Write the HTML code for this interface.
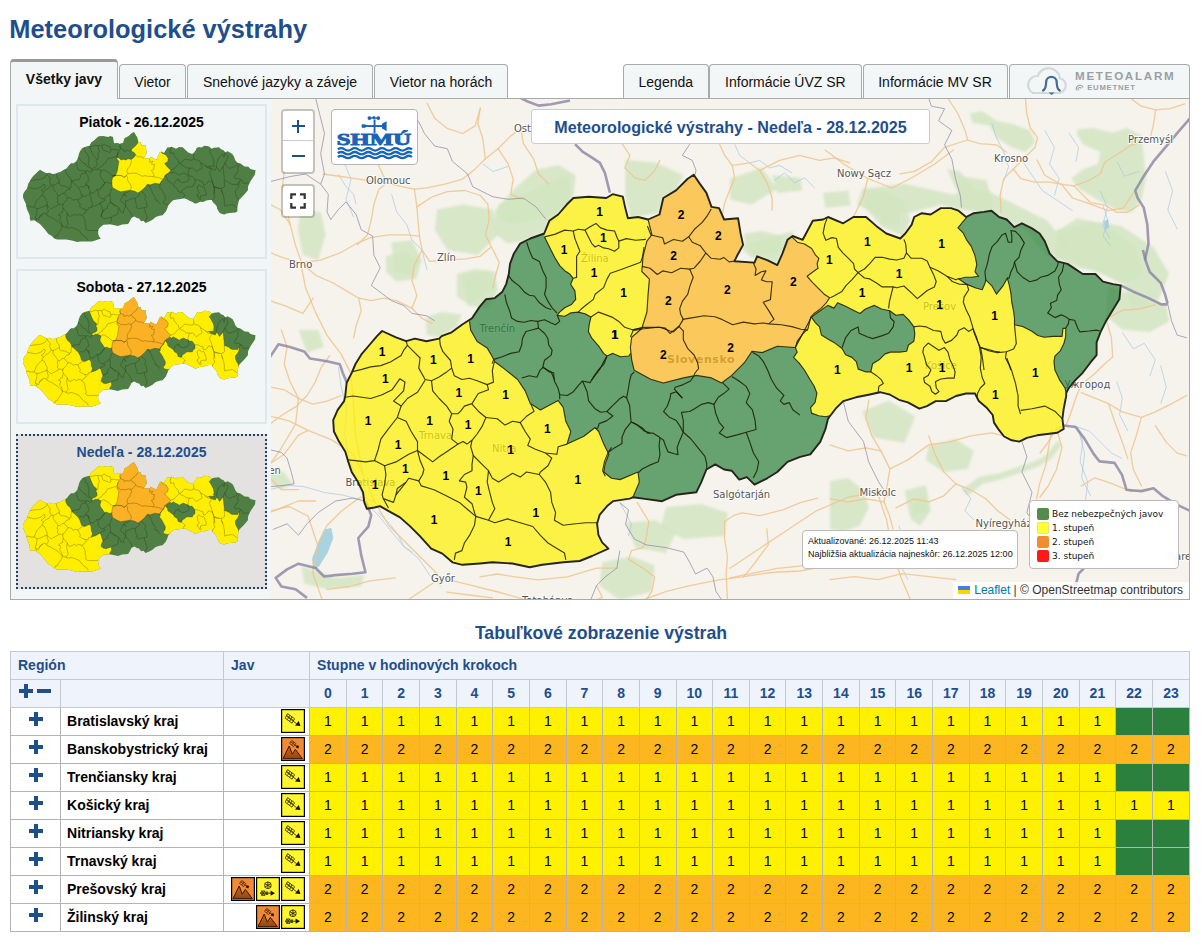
<!DOCTYPE html><html lang="sk"><head><meta charset="utf-8"><title>Meteorologické výstrahy</title><style>
*{box-sizing:border-box}
html,body{margin:0;padding:0;background:#fff}
body{width:1202px;height:947px;position:relative;overflow:hidden;font-family:"Liberation Sans",Arial,sans-serif;font-size:14px;color:#000}
h1{position:absolute;left:9.3px;top:14px;margin:0;font-size:25.4px;line-height:30px;font-weight:bold;color:#1f4e8c;white-space:nowrap}
.tab{position:absolute;top:64px;height:35px;border:1px solid #aaa;border-bottom:none;border-radius:4px 4px 0 0;background:#f3f6f6;font-size:14px;line-height:34px;text-align:center;white-space:nowrap;color:#111}
.tab.act{top:59px;height:40px;border-top:3px solid #999;font-weight:bold;line-height:35px;z-index:3}
.panel{position:absolute;left:10px;top:98px;width:1180px;height:502px;border:1px solid #aaa;background:#f3f6f6}
.thumb{position:absolute;left:16px;width:251px;height:155px;border:2px solid #dfe6ee;background:#f3f6f7}
.thumb.sel{border:2px dotted #1f3f6f;background:#e3e2e0}
.thumb .t{position:absolute;left:0;right:0;top:8px;text-align:center;font-weight:bold;font-size:14px;line-height:16px}
.thumb.sel .t{color:#1f4e8c}
.thumb svg{position:absolute;left:5.3px;top:26px}
.map{position:absolute;left:271px;top:99px;width:918px;height:500px;overflow:hidden;background:#f2efe9}
.map svg.sk{position:absolute;left:0;top:0}
.lctl{position:absolute;background:#fff;border:2px solid rgba(0,0,0,.2);border-radius:4px;background-clip:padding-box}
.zoom{left:10px;top:10px;width:34px;height:65px}
.zoom div{height:30px;width:30px;position:relative;border-bottom:1px solid #ccc}.zoom div:before{content:"";position:absolute;left:8.500px;top:14px;width:13px;height:2.200px;background:#1f4e8c}.zoom div.pl:after{content:"";position:absolute;left:13.900px;top:8.600px;width:2.200px;height:13px;background:#1f4e8c}
.zoom div+div{border-bottom:none;height:31px}
.fs{left:10px;top:85px;width:34px;height:34px}
.logo{position:absolute;left:60px;top:10px;width:87px;height:56px;background:#fff;border:1px solid #b4b4b4;border-radius:4px}
.mtitle{position:absolute;left:260px;top:10px;width:399px;height:35px;background:#fff;border:1px solid #ccc;border-radius:3px;font-weight:bold;font-size:16.1px;line-height:34px;text-align:center;color:#1f4e8c;white-space:nowrap}
.info{position:absolute;left:531px;top:431px;width:216px;height:39px;background:#fff;border:1px solid #bbb;border-radius:4px;font-size:9px;line-height:13px;padding:4px 0 0 5px;white-space:nowrap;color:#111}
.legend{position:absolute;left:758px;top:401px;width:150px;height:69px;background:#fff;border:1px solid #bbb;border-radius:4px;font-family:"DejaVu Sans",Verdana,sans-serif;font-size:9px;color:#111}
.legend div{position:absolute;left:22px;white-space:nowrap;line-height:12px}
.legend i{position:absolute;left:7px;width:12px;height:12px;border-radius:2px}
.attr{position:absolute;right:0;bottom:0;height:17px;background:rgba(255,255,255,.8);font-size:12px;line-height:17px;padding:0 6px 0 5px;white-space:nowrap;color:#333}
.attr a{color:#0078a8;text-decoration:none}
.flag{display:inline-block;width:12px;height:8px;margin-right:4px;vertical-align:0;background:linear-gradient(#4c7be1 50%,#ffd500 50%)}
h2{position:absolute;left:0;width:1202px;top:622px;margin:0;text-align:center;font-size:17.7px;line-height:22px;color:#1f4e8c;font-weight:bold}
table.wt{position:absolute;left:10px;top:651px;width:1180px;border-collapse:collapse;table-layout:fixed;font-size:14px}
table.wt td,table.wt th{border:1px solid #b4b4b4;height:28px;padding:0 0 1px 0;text-align:center;vertical-align:middle;overflow:hidden;white-space:nowrap}
table.wt tr.h th{background:#eff3fb;color:#1f4e8c;font-weight:bold;border-color:#c4c8cf}
table.wt th.l{text-align:left;padding-left:7px}
table.wt td.n{text-align:left;padding-left:6px;font-weight:bold}
table.wt td.j{text-align:right;padding-right:4px;font-size:0;line-height:0}
table.wt td.j svg{margin-left:1px;vertical-align:middle}
td.v1{background:#fff100}td.v2{background:#fdb61f}td.v0{background:#2b803e}
.plus{display:inline-block;width:14px;height:14px;position:relative;vertical-align:middle;margin-top:-6px}
.plus:before{content:"";position:absolute;left:0;top:5px;width:14px;height:4px;background:#1f4e8c}
.plus:after{content:"";position:absolute;left:5px;top:0;width:4px;height:14px;background:#1f4e8c}
.minus{display:inline-block;width:14px;height:4px;background:#1f4e8c;vertical-align:middle;margin-left:4px;margin-top:-6px}
th.pm{text-align:left!important;padding-left:8px!important}
</style></head><body>
<h1>Meteorologické výstrahy</h1>
<div class="tab act" style="left:10px;width:108px">Všetky javy</div>
<div class="tab " style="left:119px;width:67px">Vietor</div>
<div class="tab " style="left:187px;width:186px">Snehové jazyky a záveje</div>
<div class="tab " style="left:374px;width:134px">Vietor na horách</div>
<div class="tab " style="left:623px;width:85.6px">Legenda</div>
<div class="tab " style="left:709.2px;width:152.4px">Informácie ÚVZ SR</div>
<div class="tab " style="left:862.5px;width:145px">Informácie MV SR</div>
<div class="tab" style="left:1008.5px;width:181.5px"><svg width="179" height="34" viewBox="0 0 179 34"><path d="M23 28h25.5a7.5 7.5 0 0 0 1.5-14.8a11.5 11.5 0 0 0-22.3-2.2a9 9 0 0 0-4.700 17z" fill="none" stroke="#d3d8db" stroke-width="2.2"/><path d="M33 25.5c3.400-2 2.600-5.500 3.200-8.500a5.200 5.200 0 0 1 10.400 0c.6 3-.2 6.500 3.200 8.500" fill="none" stroke="#3f6f96" stroke-width="2.2" stroke-linecap="round"/><path d="M38.600 27.500h6l-3 2.600z" fill="#3f6f96"/><text x="65" y="14.600" font-family="Liberation Sans,sans-serif" font-weight="bold" font-size="11.600" letter-spacing="1.730" fill="#9a9fa3">METEOALARM</text><text x="77.200" y="25.200" font-family="Liberation Sans,sans-serif" font-weight="bold" font-size="7.700" letter-spacing="0.780" fill="#9a9fa3">EUMETNET</text><path d="M66.500 25.300a3.300 3.300 0 1 1 6.600-2.800M68.600 25.300a1.600 1.600 0 1 1 2.600-1.600" fill="none" stroke="#9a9fa3" stroke-width="1.100"/></svg></div>
<div class="panel"></div>
<svg width="0" height="0" style="position:absolute"><defs>
<clipPath id="mskc"><polygon points="344.8,339.1 347.3,326.7 353.4,317.1 358.1,308.7 365.4,299.2 373.8,291.2 382.2,283.1 387.8,278.5 401,286.2 410.6,291 419.7,289.3 430.8,292.9 443.6,291.5 446.3,289.3 456.7,286.4 467.5,279.8 478.1,274.3 486.7,263.6 493.6,256.6 502.5,256.2 510.6,250.5 515,243.3 518.4,233.4 520.5,223.5 525.1,213.6 532.3,204.1 542.7,199.9 556.8,196.1 562.8,183.8 572.1,178.3 581.6,168.8 588.4,163 603.4,162.9 620.6,165.6 627.2,162.3 636.9,165.6 638.5,177.1 640.3,187.5 650.3,186.9 660.1,190.2 671.6,186 676.6,169.8 689.6,163.1 701.6,152.6 708,148.7 713.6,158.5 719.2,167.7 723.3,182 730.7,183.7 734.8,195.4 748.7,195.2 750.1,210.5 751.8,222 744.9,233 742.1,237.8 762,240.4 764.9,234.3 774.7,238.7 784.3,244.3 790.1,233.3 796,219.7 801.2,216.2 810.9,220.6 822,202.2 832.1,201.5 837.2,199.3 851.8,206.5 862.2,200.7 874.6,201.4 884.2,210.8 893.7,218.9 907.3,224.6 912.5,219.9 919.2,211.3 922.1,203.9 929.7,200.4 938.4,202.1 948.7,196.2 958.6,196.7 966,199.6 973.2,206.3 980.8,202.8 990.9,201.9 998.5,201.1 1005.7,207.7 1013.1,210.5 1020.2,218.4 1027.9,214.9 1037.6,220.4 1044.9,225.7 1049.7,233.5 1054.2,246.3 1061.4,254.2 1071.4,257.1 1078.7,262.4 1086.1,267.8 1098.7,268.2 1105.9,276 1115.9,278.8 1123.4,280.4 1121.7,294.2 1115.1,304.2 1107.1,316.6 1101.7,326.6 1097.6,336.6 1097.2,349.3 1090.7,356.7 1082.7,366.5 1074.9,373.8 1068.3,381.2 1065.5,386.2 1065.4,389.1 1062.4,401.7 1060.8,411.8 1061.7,421.9 1055.2,425.5 1045,426.4 1034.8,427.3 1024.4,429.4 1016.6,432.9 1009,431.3 1001.5,427.2 996.8,420.7 992,412.9 991,405.2 985,397.4 977.7,390.7 974.2,383 965.3,382.6 955,384.6 944.7,389.3 934.5,388.8 925.4,393.3 917.7,395.6 906.6,388.6 897.8,385.7 889.1,380.1 879.2,377.1 867.6,379 854.8,380.9 841.9,384 833.8,391.1 825.6,400.8 822.5,410.7 816.7,423.1 805.8,435.2 795.5,437.1 782.4,441.4 771.5,450.8 760.9,456.5 747.7,462.1 740.5,454 732.7,456 725.7,446.6 718.1,444.9 709.6,439.2 700.3,443.7 694.3,455.9 688.5,465.7 667.9,466.8 653.4,472.1 634.4,468.1 624.2,466.1 620.8,467.1 604.1,468.3 597.5,472.8 589.2,481 586,489.5 586.5,500.8 589.6,508.5 595.5,515.3 578.4,521.4 565.4,525.4 548.8,525.3 527.1,526 514.2,527.4 496.9,522.1 476.7,519.2 463.9,519.2 446.2,518.9 436.3,515.5 427,505.9 416.1,499.9 405.8,486.4 396.7,475.4 387.5,465.8 376.8,458.4 368.5,452.6 362.8,453.4 355,454 353,447.3 352.8,437.2 348.7,426.5 343.4,415.8 340.8,404.1 339.1,395 333.8,384.3 329.7,373.7 330.2,362.3 335.7,352.6 343,344.5"/></clipPath>
<polygon id="m_w" points="475.4,277.1 475.8,286 481.1,297.9 490.5,305.2 494.8,314.4 496.9,319.7 506.4,328.1 518.1,339.3 524.7,351.3 528.7,364.4 538.2,371.5 556.8,363.7 561.3,370.9 562.7,385 566.9,395.6 562.1,407.8 579.2,401.6 591.4,393.7 594.9,397.8 599,410.8 603.2,421.3 598.6,431.1 596.8,438.6 604,445.5 612.5,447.4 631.2,441.2 631.8,451.4 624.2,466.1 627.3,589.3 275.9,557.6 315,189.7 452.7,203.4"/>
<polygon id="m_z" points="556.8,199.5 559.5,206.4 562.2,213.5 565,220.5 569.4,229.3 573.9,234.8 578.7,238.6 581.7,243.1 578.6,248.7 582.3,255.8 582.4,264.3 577.9,269 570.9,271.8 565.6,275.7 562.7,278.7 570.2,280.2 576.3,277.3 583.9,277.1 590.5,279.4 596.1,283.1 593.8,290.6 592.5,297.3 595.3,304.2 601.4,312.3 605.9,320.3 609,323.2 615.1,321 622.4,325 630.9,324.9 632.7,322.4 679.1,309.7 689.9,158 559.6,147.9"/>
<polygon id="m_e" points="815.1,298.3 797.2,327.8 798.8,332.4 794.9,337.5 799.9,343.2 804.9,350.7 809.6,360 813.7,367.4 816,374.7 813.7,383.6 808.8,388.7 809.4,394.1 816.5,397.2 823.6,398.6 831,397.2 816.1,601.8 1081.8,613.8 1089.1,393.9 1065.5,386.2 1064.5,381.1 1059.7,373.3 1055,362.7 1054.4,354.3 1055.5,348.9 1061.1,343.7 1065,336.7 1067,329.5 1067.3,321.4 1064.6,321.3 1063.4,329.4 1054.5,329.1 1045.5,329.6 1039.3,327.6 1033.2,322.9 1024.5,318 1016.5,316 1016.7,309.7 1016.1,302.5 1014.7,293.4 1014.2,284.4 1012.8,275.4 1011.2,269.1 1006.5,277 999.9,284.7 995.8,276.5 989.9,270 988.8,273.5 985.9,279.7 979.7,277.6 970.9,273.6 963.2,267.9 969.5,266.4 975.7,266.6 982.9,266.1 979.5,261.4 981.6,254.3 980.2,245.2 977.1,236.2 972.9,229.7 969.7,222.3 964.7,216.7 969.3,211.5 974,206.4 976.1,139.3 799,129.9 789.8,279.6 803.2,305.5"/>
<polygon id="m_o" points="800.5,217 805.5,222.7 812.5,224.9 819.3,229.8 822.5,236.3 825.8,240 823.8,245.3 824.4,249.9 817.9,254 813.2,257.3 817.4,263 824.1,270.6 829,276.2 834.2,280.1 830.3,285.3 824.7,290.3 817.2,295.3 814.4,298.3 810.9,309.7 805.2,314.7 799.4,321.6 797.2,327.8 796.9,327.7 779.3,325.3 763.8,330.7 753.8,328.8 745.5,339.7 732,351.5 721.4,358.4 711.6,352.6 696.6,349.1 683.8,350.7 663.2,354.3 650.9,349.6 635.1,339.5 633.3,329.3 633,316.5 635.1,306.4 645.7,298.4 652,282.3 654.5,264.8 656.9,249.7 650,241.6 652.4,226.5 657.3,211.6 662.7,205.6 660.1,190.2 664.5,130.8 807,140.4 802.6,213.8"/>
<polygon id="m_i" points="815.1,298.3 822.5,293.3 831.8,287.5 837.9,290.6 841.8,285.4 849.5,289.5 856.5,293.4 863.4,297.4 869.1,293.2 878.2,290.1 885,294.1 893,296.3 899,301.1 906.2,300.6 911.3,306.1 916.3,313.6 916.9,320.8 915.6,328 910.1,331.3 907.9,337.5 900.7,338.1 891.7,337.6 886.3,339.1 880.7,344.1 873.3,348.2 871.1,356.2 865.7,355.9 858.6,352.9 857.2,345.6 853,340.8 846.8,337.8 843.7,331.4 836.8,325.6 830.8,321.6 823.9,316.7 822.5,308.5 818.3,303.8"/>
<polygon id="m_n" points="650.7,236.5 658.4,238.9 665.1,245.7 670.7,242.5 679.5,244.9 688.6,241.1 697.4,242.6 701.9,242 708.6,235.2 714.5,227.6 709.7,220.1 701.9,215.9 698.8,210.3 705.5,202.7 713.1,196.9 718.9,190.1 722.8,184.1 727.1,122.2 642.9,116.2"/>
<g id="m_l" fill="none" stroke="#1a1a00" stroke-opacity="0.6" stroke-width="1.5"><polyline points="475.4,277.1 475.8,286 481.1,297.9 490.5,305.2 494.8,314.4 496.9,319.7 506.4,328.1 518.1,339.3 524.7,351.3 528.7,364.4 538.2,371.5 556.8,363.7 561.3,370.9 562.7,385 566.9,395.6 562.1,407.8 579.2,401.6 591.4,393.7 594.9,397.8 599,410.8 603.2,421.3 598.6,431.1 596.8,438.6 604,445.5 612.5,447.4 631.2,441.2 631.8,451.4 624.2,466.1"/><polyline points="556.8,199.5 559.5,206.4 562.2,213.5 565,220.5 569.4,229.3 573.9,234.8 578.7,238.6 581.7,243.1 578.6,248.7 582.3,255.8 582.4,264.3 577.9,269 570.9,271.8 565.6,275.7 562.7,278.7 570.2,280.2 576.3,277.3 583.9,277.1 590.5,279.4 596.1,283.1 593.8,290.6 592.5,297.3 595.3,304.2 601.4,312.3 605.9,320.3 609,323.2 615.1,321 622.4,325 630.9,324.9 632.7,322.4"/><polyline points="815.1,298.3 797.2,327.8 798.8,332.4 794.9,337.5 799.9,343.2 804.9,350.7 809.6,360 813.7,367.4 816,374.7 813.7,383.6 808.8,388.7 809.4,394.1 816.5,397.2 823.6,398.6 831,397.2"/><polyline points="974,206.4 969.3,211.5 964.7,216.7 969.7,222.3 972.9,229.7 977.1,236.2 980.2,245.2 981.6,254.3 979.5,261.4 982.9,266.1 975.7,266.6 969.5,266.4 963.2,267.9 970.9,273.6 979.7,277.6 985.9,279.7 988.8,273.5 989.9,270 995.8,276.5 999.9,284.7 1006.5,277 1011.2,269.1 1012.8,275.4 1014.2,284.4 1014.7,293.4 1016.1,302.5 1016.7,309.7 1016.5,316 1024.5,318 1033.2,322.9 1039.3,327.6 1045.5,329.6 1054.5,329.1 1063.4,329.4 1064.6,321.3 1067.3,321.4 1067,329.5 1065,336.7 1061.1,343.7 1055.5,348.9 1054.4,354.3 1055,362.7 1059.7,373.3 1064.5,381.1 1065.5,386.2"/><polyline points="800.5,217 805.5,222.7 812.5,224.9 819.3,229.8 822.5,236.3 825.8,240 823.8,245.3 824.4,249.9 817.9,254 813.2,257.3 817.4,263 824.1,270.6 829,276.2 834.2,280.1 830.3,285.3 824.7,290.3 817.2,295.3 814.4,298.3 810.9,309.7 805.2,314.7 799.4,321.6 797.2,327.8 796.9,327.7 779.3,325.3 763.8,330.7 753.8,328.8 745.5,339.7 732,351.5 721.4,358.4 711.6,352.6 696.6,349.1 683.8,350.7 663.2,354.3 650.9,349.6 635.1,339.5 633.3,329.3 633,316.5 635.1,306.4 645.7,298.4 652,282.3 654.5,264.8 656.9,249.7 650,241.6 652.4,226.5 657.3,211.6 662.7,205.6 660.1,190.2"/><polyline points="815.1,298.3 822.5,293.3 831.8,287.5 837.9,290.6 841.8,285.4 849.5,289.5 856.5,293.4 863.4,297.4 869.1,293.2 878.2,290.1 885,294.1 893,296.3 899,301.1 906.2,300.6 911.3,306.1 916.3,313.6 916.9,320.8 915.6,328 910.1,331.3 907.9,337.5 900.7,338.1 891.7,337.6 886.3,339.1 880.7,344.1 873.3,348.2 871.1,356.2 865.7,355.9 858.6,352.9 857.2,345.6 853,340.8 846.8,337.8 843.7,331.4 836.8,325.6 830.8,321.6 823.9,316.7 822.5,308.5 818.3,303.8 815.1,298.3"/><polyline points="353.5,316.2 363.8,314.7 372.9,313.1 383.1,312.8 393.5,310.1 404.3,304.8 407.2,299.9 411.5,295.2 410.7,290.6"/><polyline points="411.5,295.2 417.2,302.2 422.9,309.1 420.7,319 425.9,331 432.1,332.8 440,329.8 448.1,325.4 453.4,322.1 452.9,314.4 446.2,304.9 444.2,298.3 444.2,291.2"/><polyline points="453.4,322.1 455.3,329.9 462.5,334.4 470.2,333.9 477.6,337 487.3,341.7 493.8,339.8 493.6,328.3 496.4,319.6"/><polyline points="344.6,340.8 352.3,340.3 369.8,344.6 381.5,341.9 392.1,337.9 400.7,327.8 405.5,331.6 403.3,340.2 392.3,349.4 399.4,355.1 406.4,348.2 417.1,342.9 425.8,331.7"/><polyline points="399.4,355.1 394.5,366.1 384.5,376.6 375.9,386 372.4,395.8 367.4,406.8 358.4,407.2 348.4,404.8 340.8,403.4"/><polyline points="394.5,366.1 402.9,370.7 407,381.4 412.4,392 411.5,400.9 402.4,403.8 388.9,410.2 377.1,412.8 367.4,406.8"/><polyline points="432.1,332.8 432.4,343 438,351.2 444.9,359.5 449.2,367.5 446,374.8 449.1,382.7 446.9,392.8 452.8,398.3 440.7,404.9 432.6,409.2 425.7,413.7 416.3,405.2 411.5,400.9"/><polyline points="487.3,341.7 488.1,346.9 477.6,349.8 470.4,359.3 462.6,361.1 458.3,365.8 455.6,368.1 449.2,367.5"/><polyline points="470.4,359.8 476,367.4 483.1,374.4 478.5,382.9 472.8,390 467.1,395.8 461.7,399.2 458.1,396.3 452.8,398.3"/><polyline points="483.1,374.4 494.4,376.7 501.5,383.6 509.5,380.5 517,382.5 523.8,376.7 531.8,372.3 529.1,364.9"/><polyline points="517,382.5 521.2,391.8 525.7,399.8 522.6,405.8 529.9,410.3 539.8,414.9 551.1,417.1 553,409.7 562.1,407.8"/><polyline points="539.8,414.9 545.7,420.5 541.2,427.8 533,433.4 531.6,435.8 519.1,432.2 512.3,436.8 505,432.3 490.1,439.8 484.1,435.5 481,427.6 475.1,420.7 467.1,411.1 465.2,402.1 467.1,395.8"/><polyline points="467.1,411.1 465,419.8 464.4,426.1 456.4,429.2 450.7,435.1 457,436.9 457.8,442.1 454.3,451.9 461.4,459 463.1,468.1 464.1,472"/><polyline points="481,427.6 478.7,438.8 480.3,449.2 482,459.5 484,466.1 476.6,476.9 464.1,472"/><polyline points="411.5,400.9 413.2,411.2 416.2,420.4 414.4,425.3 410,431.3 400.1,427.7 397.1,431.3 387.6,436.8 385.7,442.9 382.4,450.2 372.5,445.4 371.7,441.5 375.2,431.7 377.5,421.7 377.1,412.8"/><polyline points="372.5,445.4 376.8,455.3"/><polyline points="385.7,442.9 397.1,431.3"/><polyline points="410,431.3 412,436.5 424.4,441.5 436.6,449.1 448.7,456.5 457,464.9 464.1,472 462,480.6 456,490.3 450.2,497.4 447,504.8 440.3,506.6 438.4,513.3"/><polyline points="476.6,476.9 482.7,480 495.9,477.3 508.4,482.2 520.8,487.1 527.7,496.6 534.8,504.8 544.6,511.9 550.7,516.2 551.4,523.1"/><polyline points="531.6,435.8 537.3,443.9 541.6,454.5 542,464.7 545,475.1 543.1,482.6 551.6,488.3 562,488 574.9,487.7 586.4,488.6"/><polyline points="538.8,203.4 540.7,211.7 543.3,219.5 549.7,223.5 552.3,233 555,240 554.1,250.1 552,256.7 554.7,263.7 558.4,270.7 562.9,276.5"/><polyline points="517.7,234.3 521.4,240.5 527.6,246.2 532.8,253.3 536.9,256.3 541.7,257.5 546.2,264.7 552.4,270.3 557.4,272.4"/><polyline points="512.7,253.3 513.7,261.9 516.2,270.6 517.3,277.5 522.8,281.4 529.5,282.8 536.3,281.6 543,283.1 549.9,282 556.2,285.8 560.3,287.9 564.8,284.9 563.1,279.2"/><polyline points="543,283.1 543.2,289.8 537.2,291 530.4,292.2 526.5,298.6 525.1,305.3 521.9,311.8 513.4,312.7 504.7,315.3 496.1,317.2 494,321.2"/><polyline points="543.2,289.8 548.7,295.4 551.6,300.7 551.9,307.5 554.9,312.9 553.6,317.8 546.5,322.3 544.2,329 548.9,332.7 552.2,334.7 554.9,342.9"/><polyline points="609,323.2 605.2,328.8 601.3,335.2 595.7,341.6 592,345.9"/><polyline points="556.8,199.5 566.9,197.8 577.2,194.3 585.5,195.9 590.6,194.6 597.2,195.9 602.5,193.1 608.5,190.1 612.3,194.6 618.8,197.7 626.2,199.1 628.2,206 629.6,209.5 637.3,207.6 646.3,210 656.3,209.8"/><polyline points="585.5,195.9 586.6,203.6 589.1,212.3 590.5,216.6 586.8,221.4 586.1,230.7 585.1,242.4 582,243.1"/><polyline points="597.2,195.9 600,203 602.8,209.9 605.8,213.6 609.3,212.2 614.1,215.1 619,216.3 624.7,219.3 629.1,216.3 629.6,209.5"/><polyline points="654.1,217.3 651.6,227.3 649.6,232.2 642.8,234.3 635.9,236.3 629.1,238.3 618.7,240.9 615,246.5 611,254.7 602.1,260.7 600,265.7 592.9,270.2 587.5,274 583.9,277.1"/><polyline points="596.1,283.1 604,278.7 610.6,281.8 617,284.8 623.4,289.6 628.9,295.9 636.2,299 645.6,298"/><polyline points="658.9,196.6 661.8,205.8 673.1,209.4 674.4,215.8 683.6,211.9 692.2,214.4 698.8,210.3 705.5,202.7 713.1,196.9 718.9,190.1 722.8,184.1"/><polyline points="698.8,210.3 701.9,215.9 709.7,220.1 714.5,227.6 719.5,233.3 728.2,234.8 731.9,233.2 736.9,238.1 743.2,237.6"/><polyline points="650.7,236.5 658.4,238.9 665.1,245.7 670.7,242.5 679.5,244.9 688.6,241.1 697.4,242.6 701.9,242 708.6,235.2 714.5,227.6"/><polyline points="697.4,242.6 700.4,250.9 696.1,260.5 693.9,267.5 688,274.3 684.8,281.3 685.3,286.7 687.6,292.3 682.7,299.2 677,304.1 673.5,302.9 664.8,298.7 647,297.4 636.1,299.3"/><polyline points="760.8,240.5 763,247 761.7,253.2 768.2,250 772.7,249.4 769.7,254.6 767.7,258.1 772.9,260.2 778.3,260.6 776.8,269.5 775.3,278.3 768,280.6 772.9,289 777.7,298.3 772,302.5"/><polyline points="686.7,292.3 697.6,291.2 708.4,290.2 719.1,291.8 725.9,295 736.3,301.1 747.2,299.1 757.7,301.6 766.7,301.2 772,302.5 784.5,304.2 795,306.6 803.8,309.7 810.9,311.1"/><polyline points="633.8,306.1 636.9,300 646,298.9 662.1,298.3 669.2,299.7 673.3,305.4 678,302.2 682.8,298.9 686.8,303.7 686.2,312.6 690,321.9 695.9,328.6 698.9,336.9 699.4,342.4 695.5,346.6 694.5,348.2"/><polyline points="629.1,391.2 632.6,393.3 638.7,397.3 643.6,403.1 649,403.5 655.9,408.5 659.3,411.5 660.7,417 663,423.4 669.2,425.6 672.7,426.8 672.3,419.6 675.6,412.7 679.6,404.8 676.6,398.3 673.4,392.7 666.4,388.6 661.4,382.8 665.4,377.7 668.6,370.8 669.9,365.4 675.4,364 678.7,367.9 681.2,370.8"/><polyline points="694.4,349.1 690.5,354.3 683,357.4 674.8,359.5 673.8,361.2 681.2,370.8"/><polyline points="606.5,414.7 602.5,419.8 598.2,428.5 595.7,437.3 598,442.9"/><polyline points="655.9,408.5 654.4,416.6 654.6,425.5 652.3,432.5 643,435.5 635.6,438.5 631.7,441.8"/><polyline points="679.6,404.8 686.4,411.6 693,421 699.6,430.5 701,437.8 700.6,443.2"/><polyline points="722.6,358.3 728.5,365 722.8,369.1 717.1,372.3 712.2,379.2 706.9,377.1 699.6,378.4 692.1,382.4 687.4,384.6 679.2,385 680.5,393.2 679.6,404.8"/><polyline points="712.2,379.2 713.4,388.2 716.3,397.5 720.5,403.1 715.6,408.2 722.5,413.2 733.5,411.2 742.7,409.1 752.8,407.1 752.4,398 750.4,387.2 744.7,379.6 748.9,370.8 745.7,363.4 738.9,357.6 732,352.6"/><polyline points="742.7,409.1 745.7,419.2 748.6,430.1 753.4,439.5 751,448.3 746.9,455.3"/><polyline points="754.1,329.8 760.2,333.8 764.3,339.5 768.2,348.7 771.3,357.8 776.1,367.2 782.8,374.8 778.9,380 782.3,383.8 787.7,382.3 790.9,389.7 797.8,395.4"/><polyline points="522.3,338.1 530,336.5 537.5,338.6 541.1,332.1 544.4,329.4 550.1,334.4 554.5,335.5 554.6,343.9 557.8,351.8 558.8,358 558.4,362.6"/><polyline points="558.8,358 566.3,359.4 572.7,356.1 579.4,349 582.7,346.2 590.1,348.4 595.3,341.2 600.3,335.4 605.2,331.2 608.8,323.9"/><polyline points="582.7,346.2 586.4,357.2 587.2,366.4 592.7,374.5 598.4,378.7 604.5,378.5 611.1,372.9 617.7,367.3 622.4,364.5 625.4,366.4 627.5,358.9 629.7,349.8 631.6,344 634.9,341.1"/><polyline points="604.5,378.5 610.3,383.5 603.8,387.6 596,390 594.1,394.4 591.4,394.2"/><polyline points="625.4,366.4 627.8,374.2 627.9,383.3 628.1,390.9 621.5,398.1 617.8,405.4 617.3,411.5 609.3,415.4 603.7,418.8"/><polyline points="628.1,390.9 633.9,394.4 641.1,401 646.2,402.9"/><polyline points="836.8,199.2 833.7,206.2 831.5,215.1 833.7,222.4 840.1,220.1 844.4,221.3 845.6,230.2 849.8,235.9 854.8,241.6 859.8,247.3 860.4,252.7 863.8,256.5"/><polyline points="863.8,256.5 857.2,263.3 851.5,268.3 846.7,274.4 838.5,278.4 834.9,280"/><polyline points="863.8,256.5 870.2,253.2 875.9,248.1 881.4,242.1 888.5,242.5 895.6,244.7 902.6,245.9 909.8,244.5 912.7,239.2 912.3,230.3 910.8,225.7"/><polyline points="912.7,239.2 916.9,244.8 927.5,245.4 932.7,248.3 935.1,254.7 938.3,262.1 940.7,269.3 938.6,274.6 931.3,277.9 925.7,282.1 921.1,285.5 916.9,280.8 908.4,272.3 901.2,273.7 897.7,272.6 887,272.1 881.8,268.2 875,263.4 869.7,262.2 863.8,256.5"/><polyline points="897.7,272.6 895.5,279.7 893.4,286.8 892.1,294"/><polyline points="935.1,254.7 943,258.7 951.5,264.5 960.3,268.5 963.9,267.2"/><polyline points="951.5,264.5 956.6,270.1 963.6,273.1 970.9,273.6"/><polyline points="843.8,330.5 847.8,320.8 853.6,313.9 860.9,310.7 861.5,317.1 869.3,321.1 874.6,323.2 883.6,320.9 890.9,318.6 895.7,312.6 896.9,307.2 893.5,303.5 893,296.3"/><polyline points="871.1,356.2 876.3,360.1 881.3,364.9 882.9,368.6 878.4,371 877.1,378.1"/><polyline points="925.1,334.8 929.8,330.5 935,334.3 940.2,338.2 945.7,335.7 949.1,340.4 950.5,347.6 953.7,354.9 955.3,360.4 954.1,366.7 947.9,366.4 940.6,366.9 935.1,369.4 935.7,375.7 938.2,379.3 934.5,381.9 931,379 929.5,373.6 924.3,369.8 923.6,365.2 928.2,362.7 931.2,357.5 926.9,351.9 925.5,344.6 923.9,339.2 925.1,334.8"/><polyline points="916.3,313.6 921.6,313 928.8,314.2 935.7,318.2 942.9,319.4 944.3,326.7 946.8,331.3 953.2,328.9 958.7,323.7 960.7,319.3 966.2,316.9 970.5,320.7 975.1,318.2"/><polyline points="975.1,318.2 978.3,327.3 980.6,336.4 982,347.2 980.6,357.9 982,367 984.4,373.4 979.7,377.7 976.8,382.9 975.6,390"/><polyline points="981.5,337.4 988.6,339.5 995.6,341.6 1000.9,342.7"/><polyline points="989.9,270 989.3,261.8 992.4,252.9 994.5,244.1 997.5,237.1 1003,231.9 1007.7,225.8 1011.3,224.1 1012.9,229.6 1013.6,233.2 1017.2,233.4 1017.4,227.1 1016.7,221.6 1021.1,222.7 1025.4,227.4 1029.6,234.8 1025.7,241.8 1023.7,248.8 1019,253.2 1018,257.6 1015.1,262.9 1013,269.1 1011.2,269.1"/><polyline points="1019,253.2 1021.3,263.2 1026.4,268.8 1033.4,273.5 1040.5,272 1044.2,269.4 1051.4,267.9 1058.7,263.7 1061.5,258.4 1062.6,254.3"/><polyline points="1067.8,256.8 1065.8,264.8 1062,270.1 1062.6,277.3 1064.2,282.8 1060.5,288 1059.4,293.3 1053,295.8 1053.7,300.3 1050,305.6 1057,310.4 1063.3,307.9 1067.7,309.8 1071.1,312.7 1076.5,313.8 1079.7,322.8 1081.4,325.5 1090.4,324.9 1097.6,324.3 1101.2,325.3"/><polyline points="1071.1,312.7 1070.1,317.1 1067.3,321.4"/><polyline points="970.9,273.6 972.5,279.1 967.7,286 966.6,291.4 968.9,298.7 972.2,306 974.5,315.1 976,322.3 979.1,331.4 981.6,337 989.5,340.9 998.3,343.1 1007.3,342.6 1014.6,340.1 1017.5,334.9 1017,325.8 1016.5,316"/><polyline points="981.6,337 983,346 984.2,359.9"/><polyline points="1007.3,342.6 1006.2,348.8 1009.5,356.1 1011.1,361"/><polyline points="1007.4,348.9 1011.8,361.8 1015.1,374.5 1017.2,387.3 1016.8,397.4 1019,405.6"/><polyline points="1019.2,401.8 1030.7,400.5 1043.5,398.4 1053.4,403.9 1061.3,412.3"/></g>
</defs></svg>
<div class="thumb " style="top:104px"><div class="t">Piatok - 26.12.2025</div><svg class="mini" width="232.6" height="110" viewBox="329.7 148.7 793.7 378.7" preserveAspectRatio="none"><g clip-path="url(#mskc)"><rect x="200" y="100" width="1100" height="600" fill="#4f7f44"/><use href="#m_o" fill="#ffee00"/><use href="#m_n" fill="#4f7f44"/><use href="#m_l"/></g></svg></div>
<div class="thumb " style="top:269px"><div class="t">Sobota - 27.12.2025</div><svg class="mini" width="232.6" height="110" viewBox="329.7 148.7 793.7 378.7" preserveAspectRatio="none"><g clip-path="url(#mskc)"><rect x="200" y="100" width="1100" height="600" fill="#4f7f44"/><use href="#m_w" fill="#ffee00"/><use href="#m_z" fill="#ffee00"/><use href="#m_e" fill="#ffee00"/><use href="#m_o" fill="#fbb124"/><use href="#m_i" fill="#4f7f44"/><use href="#m_l"/></g></svg></div>
<div class="thumb sel" style="top:434px"><div class="t">Nedeľa - 28.12.2025</div><svg class="mini" width="232.6" height="110" viewBox="329.7 148.7 793.7 378.7" preserveAspectRatio="none"><g clip-path="url(#mskc)"><rect x="200" y="100" width="1100" height="600" fill="#4f7f44"/><use href="#m_w" fill="#ffee00"/><use href="#m_z" fill="#ffee00"/><use href="#m_e" fill="#ffee00"/><use href="#m_o" fill="#fbb124"/><use href="#m_i" fill="#4f7f44"/><use href="#m_l"/></g></svg></div>
<div class="map">
<svg class="sk" width="918" height="500" viewBox="271 99 918 500">
<defs><filter id="bl" x="-20%" y="-20%" width="140%" height="140%"><feGaussianBlur stdDeviation="1.3"/></filter></defs>
<rect x="271" y="99" width="920" height="501" fill="#f5f3ec"/>
<g fill="#d2e5c0" fill-opacity="0.8" filter="url(#bl)">
<polygon points="494.8,210.7 512.6,190.4 535.4,170.1 558.2,165.1 575.9,175.2 573.4,195.5 558.2,213.2 545.5,230.9 522.7,241.1 507.5,243.6 494.8,233.5"/>
<polygon points="456.8,274 474.5,268.9 494.8,271.5 497.3,286.7 482.1,296.8 469.5,304.4 456.8,296.8"/>
<polygon points="426.4,317.1 441.6,312 461.9,314.5 456.8,327.2 439.1,337.3 426.4,334.8"/>
<polygon points="385.9,256.3 403.6,251.2 421.3,261.3 416.3,279.1 396,281.6 385.9,271.5"/>
<polygon points="300.4,209.5 320.7,212 325.7,234.8 318.1,260.1 302.9,255.1 297.9,229.7"/>
<polygon points="437.2,209.5 462.6,204.4 493,209.5 498,234.8 477.8,255.1 447.3,250 434.7,229.7"/>
<polygon points="391.6,242.4 411.9,239.9 422,260.1 411.9,275.3 394.1,272.8"/>
<polygon points="498,204.4 523.4,194.3 548.7,181.6 570,174 570,204.4 548.7,217.1 513.2,224.7 498,219.6"/>
<polygon points="462.6,275.3 487.9,270.3 498,290.6 487.9,308.3 467.6,305.8"/>
<polygon points="625.3,160 655.7,162.5 683.6,175.2 676,190.4 663.3,198 658.3,213.2 630.4,217 625.3,195.5"/>
<polygon points="744.4,233.5 762.1,230.9 782.4,236 781.2,253.7 777.3,263.9 757.1,256.3 744.4,246.1"/>
<polygon points="772.3,175.2 800.2,177.7 802.7,190.4 777.3,192.9"/>
<polygon points="823,192.9 848.3,190.4 850.8,205.6 825.5,208.1"/>
<polygon points="863.5,187.9 888.8,192.9 900,210.7 900,225.9 878.7,223.3 863.5,205.6"/>
<polygon points="880,190.4 902.8,198 910.4,220.8 902.8,236 880,225.9"/>
<polygon points="956,175.2 986.4,180.3 994,205.6 976.3,210.7 961.1,208.1"/>
<polygon points="1057.3,230.9 1077.6,218.3 1108,225.9 1135.9,246.1 1143.5,276.5 1123.2,284.1 1097.9,271.5 1072.6,266.4 1054.8,256.3"/>
<polygon points="625.3,522.7 655.7,520.2 676,532.8 665.9,553.1 635.5,548"/>
<polygon points="602.3,562.3 631.4,556.5 654.7,565.2 651.8,591.4 619.8,599.9 599.4,585.6"/>
<polygon points="666.4,507 701.3,504.1 727.5,512.8 724.6,536.1 683.8,539 660.5,527.4"/>
<polygon points="270,466.8 284.2,472.5 292.8,483.9 281.4,489.6 270,483.9"/>
<polygon points="301.3,566.5 321.3,572.2 335.5,577.9 364,575.1 361.2,586.5 327,589.3 304.2,583.6"/>
<polygon points="298.5,330 318.4,330 324.1,347.1 307,352.8"/>
<polygon points="970,113.5 982,111.1 996.5,120.7 1013.4,124.3 1030.3,130.4 1035.1,142.4 1025.5,152.1 1011,147.3 996.5,137.6 989.3,125.5 972.4,123.1"/>
<polygon points="1077.3,129.2 1093,128 1112.3,132.8 1126.8,128 1141.3,135.2 1143.7,154.5 1146.1,178.6 1141.3,200.3 1131.6,212.4 1117.1,210 1102.7,202.7 1090.6,195.5 1078.5,188.3 1071.3,178.6 1083.4,169 1097.8,164.1 1100.2,152.1 1083.4,144.8 1077.3,135.2"/>
<polygon points="947,169 960.3,171.4 972.4,185.9 982,197.9 994.1,207.6 979.6,212.4 965.1,202.7 955.5,188.3"/>
<polygon points="1056.8,229.3 1073.7,226.9 1093,234.1 1109.9,243.8 1129.2,248.6 1141.3,259.9 1054.4,259.9"/>
<polygon points="830,480.9 848,477.9 862.9,489.8 868.9,507.8 859.9,525.8 842,531.8 830,528.8"/>
<polygon points="961.8,489.8 979.7,476.4 997.7,473.4 1015.7,467.4 1033.7,461.4 1045.6,455.4 1057.6,440.4 1062.1,444.9 1050.1,459.9 1036.6,467.4 1018.7,473.4 1000.7,479.4 982.7,483.9 967.8,495.8"/>
<polygon points="913.9,498.8 925.8,495.8 928.8,513.8 919.8,525.8 910.9,519.8"/>
<polygon points="928.8,444.9 955.8,438.9 973.8,450.9 967.8,468.9 943.8,471.9 925.8,459.9"/>
<polygon points="862.3,188.9 904.6,183.7 952.2,194.2 984,188.9 1015.7,204.8 1047.5,220.7 1068.6,247.1 1047.5,257.7 1026.3,231.3 994.6,212.8 962.8,210.1 941.6,204.8 909.9,212.8 878.1,215.4 857,204.8"/>
<polygon points="1058,236.6 1089.8,220.7 1121.5,226 1153.3,247.1 1169.2,273.6 1158.6,300.1 1132.1,310.6 1124.2,284.2 1100.4,273.6 1073.9,263"/>
<polygon points="730,178.4 761.7,167.8 777.6,188.9 751.2,204.8 730,199.5"/>
<polygon points="740.6,247.1 761.7,239.2 793.5,231.3 788.2,249.8 751.2,257.7"/>
<polygon points="862.3,411.2 888.7,400.6 915.2,416.5 904.6,442.9 872.9,437.6"/>
<polygon points="904.6,490.5 925.8,485.2 931.1,511.7 909.9,517"/>
<polygon points="1108.6,285.7 1130.6,293.9 1166.2,304.9 1169,321.4 1149.8,332.3 1122.3,329.6 1105.9,315.9"/>
</g>
<g fill="#aad3df">
<polygon points="324.1,529.5 331.3,528.1 333.3,538 327.9,552.3 319,566.5 312.7,570 312.2,558 317.9,543.7"/>
<polygon points="1104.2,220.8 1108,219.5 1109.3,227.1 1105.5,229.7"/>
<polygon points="1103.9,222 1108,221.6 1108.9,228.1 1105.1,229.3"/>
</g>
<g fill="none" stroke="#9fc3e6" stroke-width="0.8" stroke-opacity="0.8" stroke-linejoin="round">
<polyline points="734.7,144.2 739.7,155.4 749.7,162.9 759.7,160.4 769.6,167.9 779.6,165.4 792.1,172.9"/>
<polyline points="774.6,180.4 784.6,172.9 794.6,182.9 804.6,177.9 814.6,187.8"/>
<polyline points="1021.9,160 1032,175.2 1042.1,190.4 1057.3,200.5 1072.6,210.7"/>
<polyline points="1103,205.6 1108,220.8 1103,236 1110.6,246.1"/>
<polyline points="1077.6,426.4 1082.7,441.6 1080.2,461.9 1087.8,482.1 1085.2,502.4"/>
<polyline points="378.3,512.4 389.7,523.8 398.2,535.2 403.9,546.6 412.5,552.3"/>
<polyline points="338.4,174 346,186.7 353.6,194.3 356.1,204.4"/>
<polyline points="619.8,502.6 625.6,512.8 631.4,524.4 628.5,536.1"/>
<polyline points="991.7,123.1 996.5,137.6 1003.7,152.1 1008.6,166.6 1003.7,181"/>
<polyline points="1044.8,130.4 1054.4,147.3 1049.6,164.1 1059.2,178.6 1054.4,195.5"/>
<polyline points="1068.9,132.8 1078.5,147.3 1076.1,161.7"/>
<polyline points="1100.2,190.7 1107.5,207.6 1102.7,224.5 1109.9,238.9"/>
<polyline points="1117.1,161.7 1124.4,176.2 1138.8,171.4"/>
<polyline points="1165.4,171.4 1172.6,190.7 1167.8,210 1177.4,229.3"/>
<polyline points="961.8,486.9 970.8,498.8 964.8,510.8 973.8,519.8"/>
<polyline points="1078.6,429.9 1084.6,453.9 1081.6,477.9 1090.6,495.8"/>
<polyline points="898.9,525.8 904.9,543.8 898.9,561.7 907.9,579.7"/>
<polyline points="338.4,128.4 346,143.6 343.5,161.3 351.1,179.1 346,199.3 353.6,217.1"/>
<polyline points="391.6,194.3 396.7,212 406.8,224.7 411.9,239.9 422,250 427.1,270.3"/>
<polyline points="482.8,163.9 493,171.5 508.2,166.4"/>
<polyline points="338.4,367 341.2,387 346.9,409.8 344.7,432.6 348.4,455.4 355.5,478.2 364,498.1"/>
<polyline points="270,489.6 287.1,485.3 304.2,486.7 324.1,492.4 344.1,495.3 364,501"/>
<polyline points="364,501 378.3,515.2 389.7,529.5 403.9,546.6 418.2,558 429.6,575.1 441,586.5"/>
<polyline points="1122.3,332.3 1133.3,348.8 1144.3,343.3 1155.3,359.8 1149.8,376.2"/>
<polyline points="1116.8,381.7 1122.3,398.2 1119.6,414.7 1127.8,431.1"/>
<polyline points="1160.7,365.3 1166.2,387.2 1160.7,403.7"/>
<polyline points="1072.9,425.6 1089.4,431.1 1100.4,442.1 1111.4,453.1 1122.3,458.6"/>
</g>
<g fill="none" stroke="#f0c48c" stroke-width="1.3" stroke-opacity="0.85" stroke-linejoin="round" stroke-linecap="round">
<polyline points="300.9,264.1 305.6,287.8 315.2,311.6 327,335.4 341.3,354.4 350.8,373.4 353.2,401.9 355.6,435.2 362.7,473.2 374.6,501.7 388.8,525.5 407.8,544.5 426.8,563.5 441.1,577.8 469.6,584.9 498.1,592 526.7,600.1"/>
<polyline points="270,416.2 289,420.9 308,430.4 331.8,439.9 353.2,454.2 362.7,473.2"/>
<polyline points="270,463.7 284.3,454.2 298.5,435.2 308,430.4"/>
<polyline points="441.1,577.8 426.8,587.3 407.8,600.1"/>
<polyline points="317.5,544.5 327,525.5 341.3,511.2 360.3,497 374.6,501.7"/>
<polyline points="270,511.2 289,506.5 308,516 317.5,544.5 312.8,573 322.3,600.1"/>
<polyline points="825.1,150 844.1,164.3 867.8,178.5 891.6,188 910.6,178.5 934.4,164.3 953.4,150"/>
<polyline points="867.8,178.5 863.1,197.5 853.6,216.5"/>
<polyline points="877.3,492.2 886.8,520.7 891.6,549.2 901.1,577.8 910.6,600.1"/>
<polyline points="877.3,492.2 848.8,497 815.6,511.2 787,530.2 758.5,549.2 730,568.3"/>
<polyline points="730,577.8 777.5,568.3 825.1,563.5 872.6,558.7 920.1,554 958.1,544.5 986.7,535 1000.9,530.2"/>
<polyline points="643.1,599.9 666.4,591.4 689.7,585.6 718.8,579.8 742.1,576.9 771.2,572.5 800.3,571 830,565.2"/>
<polyline points="637.3,502.6 648.9,521.5 646,539 643.1,547.7 631.4,550.7 628.5,559.4 643.1,568.1 654.7,576.9 651.8,591.4 646,599.9"/>
<polyline points="724.6,521.5 733.3,515.7 742.1,512.8 759.6,515.7 782.9,509.9 800.3,502.6 817.8,498.2"/>
<polyline points="724.6,521.5 724.6,539 727.5,556.5 726.1,574 727.5,599.9"/>
<polyline points="766.8,528.8 768.3,544.8 759.6,556.5 750.8,568.1 743.5,576.9"/>
<polyline points="480,576.9 497.5,574 514.9,576.9 538.2,579.8 567.4,576.9 596.5,568.1 616.9,568.1"/>
<polyline points="596.5,585.6 602.3,597.3 596.5,599.9"/>
<polyline points="719.7,144.2 724.7,155.4 732.2,165.4 734.7,177.9 729.7,190.3 724.7,202.8 722.2,215.3"/>
<polyline points="732.2,165.4 749.7,162.9 759.7,170.4 767.1,182.9 772.1,197.8 772.1,210.3"/>
<polyline points="759.7,170.4 779.6,160.4 799.6,155.4 819.5,160.4 834.5,157.9 849.5,162.9"/>
<polyline points="622.4,144.2 629.9,155.4 624.9,167.9 634.9,177.9 644.9,180.4 654.8,170.4 659.8,160.4"/>
<polyline points="1037.1,160 1044.7,175.2 1062.4,185.3 1072.6,198 1087.8,203.1 1108,210.7 1123.2,208.1 1133.4,192.9"/>
<polyline points="948.3,99 957.9,113.5 965.1,130.4 967.6,140 979.6,143.6 996.5,144.8 1006.2,152.1"/>
<polyline points="900,173.8 914.5,171.4 931.4,161.7 944.6,147.3 967.6,140"/>
<polyline points="1025.5,99 1026.7,113.5 1030.3,128 1037.5,137.6 1035.1,147.3 1020.6,161.7 1013.4,169 1003.7,178.6 1000.1,195.5 1001.3,212.4"/>
<polyline points="1013.4,169 1020.6,178.6 1035.1,182.2 1049.6,182.2 1064.1,184.6 1073.7,185.9 1083.4,195.5 1090.6,202.7 1105.1,205.2 1117.1,212.4 1126.8,212.4 1138.8,205.2"/>
<polyline points="1073.7,185.9 1088.2,181 1100.2,173.8 1105.1,161.7 1117.1,154.5 1131.6,144.8 1141.3,142.4"/>
<polyline points="1131.6,99 1141.3,106.2 1155.7,109.9 1170.2,108.7 1184.7,103.8"/>
<polyline points="1155.7,109.9 1153.3,125.5 1150.9,135.2"/>
<polyline points="868.9,400 865.9,418 871.9,435.9 880.9,450.9 889.9,468.9 886.9,486.9 883.9,501.8 889.9,516.8 892.9,528.8"/>
<polyline points="928.8,435.9 934.8,453.9 943.8,471.9 955.8,483.9 970.8,489.8 985.7,498.8 997.7,510.8 1009.7,519.8"/>
<polyline points="889.9,468.9 907.9,459.9 928.8,444.9 949.8,441.9 970.8,435.9 991.7,432.9 1003.7,435.9"/>
<polyline points="955.8,483.9 943.8,495.8 928.8,501.8 913.9,498.8 895.9,507.8"/>
<polyline points="1051.6,429.9 1048.6,447.9 1045.6,465.9 1039.6,483.9 1036.6,498.8"/>
<polyline points="830,579.7 854,576.7 877.9,579.7 901.9,573.7 928.8,576.7 955.8,579.7"/>
<polyline points="830,444.9 848,450.9 865.9,447.9 880.9,450.9"/>
<polyline points="830,498.8 848,501.8 865.9,498.8 883.9,501.8"/>
<polyline points="270,252.5 282.7,257.6 300.4,262.7 320.7,260.1 340.9,252.5 356.1,243.7 371.3,237.3 389.1,234.8 406.8,234.8 419.5,236.1 422,250 429.6,261.4 447.3,260.1 465.1,258.9 480.3,256.3 490.4,247.5"/>
<polyline points="416.9,206.9 418.2,222.1 419.5,236.1"/>
<polyline points="386.5,182.9 378.9,189.2 373.9,204.4 371.3,219.6 367.5,234.8 357.4,244.9"/>
<polyline points="386.5,182.9 401.7,186.7 414.4,189.2 427.1,187.9 444.8,184.1 462.6,179.1 475.2,168.9 485.4,158.8 498,148.7 510.7,136 520.8,128.4"/>
<polyline points="414.4,189.2 416.9,206.9 432.1,196.8 447.3,191.7 465.1,190.5 480.3,195.5 487.9,204.4 489.2,219.6 485.4,234.8 493,250 499.3,262.7 495.5,275.3 493,288"/>
<polyline points="386.5,182.9 381.5,171.5 376.4,161.3"/>
<polyline points="323.2,174 340.9,176.5 358.7,179.1 373.9,181.6 386.5,182.9"/>
<polyline points="301.7,262.7 295.3,244.9 290.3,224.7 285.2,204.4 282.7,184.1 285.2,163.9"/>
<polyline points="270,204.4 280.1,209.5 290.3,224.7"/>
<polyline points="301.7,262.7 315.6,275.3 333.3,283 346,290.6 358.7,298.2 371.3,300.7 384,298.2 396.7,300.7 411.9,308.3 422,318.4 432.1,323.5"/>
<polyline points="358.7,298.2 361.2,310.8 356.1,326 353.6,337.9"/>
<polyline points="422,250 414.4,265.2 411.9,280.4 416.9,295.6 411.9,308.3"/>
<polyline points="270,300.7 285.2,305.8 302.9,313.4 313.1,298.2"/>
<polyline points="480.3,108.1 477.8,123.3 482.8,138.5 485.4,158.8"/>
<polyline points="427.1,103.1 434.7,118.3 447.3,128.4 462.6,133.5 475.2,125.9 480.3,108.1"/>
<polyline points="520.8,128.4 523.4,143.6 533.5,158.8 538.6,174 548.7,184.1"/>
<polyline points="498,148.7 508.2,163.9 513.2,179.1 510.7,194.3 523.4,199.3"/>
<polyline points="270,424 281.4,415.5 295.6,406.9 307,395.5 315.6,381.3 321.3,367 329.8,355.6"/>
<polyline points="270,387 284.2,389.8 298.5,398.4 312.7,404.1 327,401.2 341.2,395.5"/>
<polyline points="281.4,330 287.1,347.1 284.2,364.2 289.9,381.3 298.5,398.4"/>
<polyline points="270,512.4 284.2,506.7 298.5,501 315.6,501"/>
<polyline points="327,589.3 349.8,586.5 369.7,580.8 395.4,577.9"/>
<polyline points="446.7,592.2 469.5,595 492.3,597.9"/>
<polyline points="270,463.9 278.5,452.5 287.1,438.3 295.6,424 298.5,398.4"/>
<polyline points="270,478.2 281.4,489.6 298.5,489.6"/>
<polyline points="1105.9,318.6 1111.4,337.8 1112.7,357 1103.1,365.3 1094.9,373.5 1081.2,384.5 1075.7,398.2 1070.2,414.7 1066.1,425.6"/>
<polyline points="1081.2,392.7 1094.9,398.2 1108.6,403.7 1122.3,411.9 1141.5,417.4 1155.3,411.9 1171.7,403.7 1186.8,395.4"/>
<polyline points="1141.5,417.4 1136,436.6 1130.6,453.1 1133.3,469.5 1141.5,486"/>
<polyline points="1108.6,403.7 1114.1,420.1 1122.3,442.1 1127.8,458.6"/>
<polyline points="1155.3,425.6 1166.2,442.1 1177.2,453.1 1186.8,455.8"/>
<polyline points="1040,453.1 1048.2,442.1 1056.5,428.4 1066.1,425.6"/>
<polyline points="1056.5,428.4 1062,447.6 1056.5,469.5 1048.2,486 1040,497"/>
<polyline points="1081.2,486 1094.9,477.8 1111.4,483.3 1130.6,491.5 1149.8,488.7"/>
<polyline points="1105.9,318.6 1122.3,310.4 1138.8,309 1155.3,304.9"/>
</g>
<g fill="none" stroke="#8c84a4" stroke-width="1" stroke-opacity="0.7" stroke-linejoin="round">
<polyline points="315.6,98 319.4,113.2 324.5,133.5 320.7,153.7 324.5,174 320.7,184.1 328.3,194.3 327,212 330.8,219.6 338.4,209.5 346,201.9 356.1,214.5 361.2,229.7 372.6,236.1 373.9,255.1 380.2,267.7 371.3,285.5 381.5,293.1 391.6,300.7 404.3,305.8 411.9,313.4 427.1,315.9 434.7,321"/>
<polyline points="418.2,120.8 424.5,133.5 434.7,146.1 447.3,148.7 452.4,161.3 467.6,174 472.7,186.7 487.9,194.3 493,196.8"/>
<polyline points="270,181.6 280.1,179.1 290.3,176.5 305.5,174 320.7,184.1"/>
<polyline points="493,196.8 508.2,199.3 523.4,198.1 536,206.9 546.2,219.6"/>
<polyline points="689.8,144.2 682.3,155.4 692.3,160.4 696,170.4 694.8,175.4"/>
<polyline points="270,449.7 281.4,452.5 287.1,458.2 291.4,472.5 294.2,483.9 284.2,485.3 270,486.7"/>
<polyline points="272.8,529.5 287.1,523.8 298.5,535.2 307,523.8 318.4,512.4 335.5,501 352.6,498.1 365.5,501"/>
<polyline points="619.8,502.6 628.5,509.9 625.6,524.4 634.3,539 646,544.8 666.4,547.7 683.8,552.1 689.7,562.3 695.5,574 707.1,568.1 713,576.9 715.9,591.4 721.7,599.9"/>
<polyline points="619.8,550.7 616.9,568.1 605.2,576.9 596.5,585.6 590.7,599.9"/>
<polyline points="1021.9,441.6 1026.9,456.8 1021.9,472 1032,492.3 1026.9,512.6 1037.1,527.8"/>
<polyline points="843.2,401.1 848.3,421.3 863.5,441.6 868.6,461.9 878.7,482.1 888.8,497.3"/>
<polyline points="929,99 931.4,106.2 944.6,108.7 938.6,120.7 951.9,130.4 944.6,144.8 951.9,159.3 955.5,178.6 960.3,195.5 961.5,207.6"/>
<polyline points="1167.6,303.5 1171.7,321.4 1177.2,335.1 1186.8,337.8"/>
</g>
<g fill="none" stroke="#8a83a3" stroke-width="2.6" stroke-opacity="0.8" stroke-linejoin="round">
<polyline points="520.8,98 528.4,101.8 538.6,105.6 551.2,104.3 570,100.5"/>
<polyline points="575,144.2 582.5,151.7 592.4,157.9 599.9,162.9 604.9,172.9 607.4,182.9 609.9,192.8"/>
<polyline points="270,357.1 278.5,344.2 289.9,347.1 304.2,351.4 309.9,358.5 327,361.3 339.8,364.2 342.7,372.7 346.9,382.7"/>
<polyline points="365.5,501 371.2,515.2 368.3,526.6 358.3,538 361.2,555.1 365.5,572.2 352.6,573.7 335.5,575.1 324.1,576.5 315.6,568 298.5,563.7 287.1,569.4 275.7,577.9 281.4,586.5 295.6,589.3 307,597.9"/>
<polyline points="1120.7,285.4 1133.4,291.7 1148.6,298.1 1161.2,304.4 1167.6,304.4"/>
<polyline points="1190,118.3 1177.4,132.8 1165.4,147.3 1153.3,161.7 1143.7,176.2 1135.2,190.7 1137.6,197.9 1143.7,207.6 1147.3,224.5 1148.5,243.8 1144.9,259.9"/>
<polyline points="1063.6,425.5 1075.6,427 1084.6,438.9 1093.6,453.9 1099.5,461.4 1114.5,462.9 1122,474.9 1126.5,489.8 1141.5,491.3 1153.5,488.3 1162.4,495.8 1177.4,504.8 1190,510.8"/>
<polyline points="1084.6,567.7 1078.6,573.7 1075.6,585.7"/>
<polyline points="1142.9,250 1145.7,261 1149.8,272 1160.7,282.9 1164.9,293.9 1167.6,303.5"/>
</g>
<g font-family="DejaVu Sans, Verdana, sans-serif" stroke="#fff" stroke-width="2" stroke-opacity="0.8" stroke-linejoin="round" paint-order="stroke" style="paint-order:stroke">
<text x="366" y="183.6" font-size="10" font-weight="normal" fill="#555">Olomouc</text>
<text x="437" y="260.6" font-size="10" font-weight="normal" fill="#555">Zlín</text>
<text x="289" y="268.1" font-size="10" font-weight="normal" fill="#555">Brno</text>
<text x="514" y="132.1" font-size="10" font-weight="normal" fill="#555">Ostrava</text>
<text x="837" y="176.6" font-size="10" font-weight="normal" fill="#555">Nowy Sącz</text>
<text x="994" y="161.6" font-size="10" font-weight="normal" fill="#555">Krosno</text>
<text x="1128" y="142.6" font-size="10" font-weight="normal" fill="#555">Przemyśl</text>
<text x="479.5" y="331.6" font-size="10" font-weight="normal" fill="#555">Trenčín</text>
<text x="581" y="262.1" font-size="10" font-weight="normal" fill="#555">Žilina</text>
<text x="419" y="439.1" font-size="10" font-weight="normal" fill="#555">Trnava</text>
<text x="492" y="452.1" font-size="10" font-weight="normal" fill="#555">Nitra</text>
<text x="345.5" y="485.6" font-size="10" font-weight="normal" fill="#555">Bratislava</text>
<text x="667" y="363.46" font-size="11" font-weight="bold" fill="#7a6a5a" letter-spacing="0.6">Slovensko</text>
<text x="923" y="309.6" font-size="10" font-weight="normal" fill="#555">Prešov</text>
<text x="925" y="368.6" font-size="10" font-weight="normal" fill="#555">Košice</text>
<text x="1064.5" y="388.1" font-size="10" font-weight="normal" fill="#555">Ужгород</text>
<text x="713" y="498.1" font-size="10" font-weight="normal" fill="#555">Salgótarján</text>
<text x="859.5" y="495.6" font-size="10" font-weight="normal" fill="#555">Miskolc</text>
<text x="975.5" y="526.6" font-size="10" font-weight="normal" fill="#555">Nyíregyháza</text>
<text x="431" y="581.6" font-size="10" font-weight="normal" fill="#555">Győr</text>
<text x="522" y="604.1" font-size="10" font-weight="normal" fill="#555">Tatabánya</text>
<text x="256" y="473.6" font-size="10" font-weight="normal" fill="#555">Wien</text>
<text x="1140.5" y="560.1" font-size="10" font-weight="normal" fill="#555">Satu Mare</text>
</g>
<defs><clipPath id="skc"><polygon points="345.3,395.6 346.6,383 351.7,372.8 355.5,364 361.8,353.8 369.4,345 377,336.1 382.1,331 396,337.3 406.1,341.2 415,338.6 426.4,341.2 439.1,338.6 441.6,336.1 451.7,332.3 461.9,324.7 472,318.3 479.6,306.9 485.9,299.3 494.8,298.1 502.4,291.7 506.2,284.1 508.8,274 510,263.9 513.8,253.7 520.2,243.6 530.3,238.5 544.2,233.5 549.3,220.8 558.2,214.5 567,204.3 573.4,198 588.6,196.7 606.3,198 612.7,194.2 622.8,196.7 625.3,208.1 627.9,218.3 638,217 648.1,219.5 659.5,214.5 663.3,198 676,190.4 687.4,179 693.7,174.7 700.1,184.1 706.4,192.9 711.5,206.9 719.1,208.1 724.1,219.5 738.1,218.3 740.6,233.5 743.1,244.9 736.8,256.3 734.3,261.3 754.5,262.6 757.1,256.3 767.2,260.1 777.3,265.1 782.4,253.7 787.5,239.8 792.6,236 802.7,239.8 812.8,220.8 823,219.5 828,217 843.2,223.3 853.4,217 866,217 876.2,225.9 886.3,233.5 900.3,238.5 905.3,233.5 911.7,224.6 914.2,217 921.8,213.2 930.7,214.5 940.8,208.1 950.9,208.1 958.5,210.7 966.1,217 973.7,213.2 983.9,211.9 991.5,210.7 999.1,217 1006.7,219.5 1014.3,227.1 1021.9,223.3 1032,228.4 1039.6,233.5 1044.7,241.1 1049.7,253.7 1057.3,261.3 1067.5,263.9 1075.1,268.9 1082.7,274 1095.4,274 1103,281.6 1113.1,284.1 1120.7,285.4 1119.4,299.3 1113.1,309.5 1105.5,322.1 1100.4,332.3 1096.6,342.4 1096.6,355.1 1090.3,362.7 1082.7,372.8 1075.1,380.4 1068.8,388 1066.2,393.1 1066.2,396 1063.7,408.7 1062.4,418.8 1063.7,428.9 1057.3,432.7 1047.2,434 1037.1,435.3 1026.9,437.8 1019.3,441.6 1011.7,440.3 1004.1,436.5 999.1,430.2 994,422.6 992.7,415 986.4,407.4 978.8,401.1 975,393.5 966.1,393.5 956,396 945.9,401.1 935.7,401.1 926.9,406.1 919.3,408.7 907.9,402.3 899,399.8 890.1,394.7 880,392.2 868.6,394.7 855.9,397.3 843.2,401.1 835.6,408.7 828,418.8 825.5,428.9 820.4,441.6 810.3,454.3 800.2,456.8 787.5,461.9 777.3,472 767.2,478.3 754.5,484.7 746.9,477.1 739.3,479.6 731.7,470.7 724.1,469.5 715.3,464.4 706.4,469.5 701.3,482.1 696.3,492.3 676,494.8 662.1,501.2 643.1,498.6 632.9,497.3 629.6,498.6 613.3,501.1 607.1,506.1 599.6,514.9 597.1,523.6 598.4,534.8 602.1,542.3 608.4,548.6 592.1,556 579.7,561 563.4,562.3 542.2,564.8 529.7,567.3 512.3,563.5 492.3,562.3 479.8,563.5 462.4,564.8 452.4,562.3 442.4,553.6 431.2,548.6 419.9,536.1 409.9,526.1 400,517.4 388.7,511.1 380,506.1 374.5,507.5 366.9,508.8 364.3,502.4 363.1,492.3 358,482.1 351.7,472 347.9,460.6 345.3,451.7 339,441.6 333.9,431.5 333.2,420.1 337.7,409.9 344.1,401.1"/></clipPath></defs>
<g clip-path="url(#skc)" opacity="0.7">
<rect x="300" y="150" width="900" height="450" fill="#2b803e"/>
<polygon fill="#fff100" points="469.5,321.3 470.7,330.1 477.1,341.5 487.2,347.9 492.3,356.7 494.8,361.8 505,369.4 517.6,379.5 525.2,390.9 530.3,403.6 540.4,409.9 558.2,400.6 563.2,407.4 565.8,421.3 570.8,431.5 567,444.1 583.5,436.5 594.9,427.7 598.7,431.5 603.8,444.1 608.8,454.3 605,464.4 603.8,472 611.4,478.3 620,479.6 638,472 639.3,482.1 632.9,497.3 645,620 300,620 300,250 440,250"/>
<polygon fill="#fff100" points="544.5,236.9 547.8,243.6 551.2,250.4 554.6,257.2 559.7,265.6 564.7,270.7 569.8,274.1 573.2,278.3 570.6,284.2 574.9,290.9 575.7,299.4 571.5,304.5 564.7,307.8 559.7,312.1 557.1,315.4 564.7,316.3 570.6,312.9 578.2,312.1 585,313.8 590.9,317.1 589.2,324.7 588.4,331.5 591.8,338.2 598.5,345.8 603.6,353.4 607,356 612.9,353.4 620.5,356.8 628.9,356 630.6,353.4 676,337.3 676,185.3 543,185.3"/>
<polygon fill="#fff100" points="811.5,317.1 795.4,347.6 797.2,352.1 793.6,357.4 799,362.8 804.4,370 809.7,379 814.2,386.2 816.9,393.3 815.1,402.3 810.6,407.7 811.5,413.1 818.7,415.8 825.9,416.7 833.1,414.9 830,620 1090,620 1090,400 1066.2,393.1 1065,388 1059.9,380.4 1054.9,370 1054,361.6 1054.9,356.2 1060.3,350.8 1063.9,343.6 1065.7,336.4 1065.7,328.3 1063,328.3 1062.1,336.4 1053.1,336.4 1044.1,337.3 1037.8,335.5 1031.5,331 1022.6,326.5 1014.5,324.8 1014.5,318.5 1013.6,311.3 1011.8,302.3 1010.9,293.3 1009.1,284.4 1007.3,278.1 1002.8,286.2 996.5,294.2 992.1,286.2 985.8,279.9 984.9,283.5 982.2,289.8 975.9,288 966.9,284.4 958.8,279 965.1,277.2 971.4,277.2 978.6,276.3 975,271.8 976.8,264.6 975,255.6 971.4,246.7 966.9,240.4 963.3,233.2 958,227.8 962.4,222.4 966.9,217.1 966,150 785,150 785,300 800,325"/>
<polygon fill="#fdb61f" points="791.9,236.8 797.3,242.2 804.5,244 811.7,248.5 815.3,254.8 818.9,258.3 817.1,263.7 818,268.2 811.7,272.7 807.2,276.3 811.7,281.7 818.9,288.9 824.2,294.2 829.6,297.8 826,303.2 820.7,308.6 813.5,314 810.8,317.2 808,328.7 802.6,334.1 797.2,341.3 795.4,347.6 795.1,347.5 777.3,346.2 762.1,352.6 752,351.3 744.4,362.7 731.7,375.4 721.6,383 711.5,377.9 696.3,375.4 683.6,377.9 663.3,383 650.7,379.2 634.2,370.3 631.7,360.2 630.4,347.5 631.7,337.3 641.8,328.5 646.9,312 648.1,294.3 649.4,279.1 641.8,271.5 643.1,256.3 646.9,241.1 651.9,234.7 648.1,219.5 648.1,160 793.8,160 793.8,233.5"/>
<polygon fill="#2b803e" points="811.5,317.1 818.7,311.7 827.7,305.4 834,308.1 837.6,302.7 845.6,306.3 852.8,309.9 860,313.5 865.4,309 874.4,305.4 881.5,309 889.6,310.8 895.9,315.3 903.1,314.4 908.5,319.7 913.9,326.9 914.8,334.1 913.9,341.3 908.5,344.9 906.7,351.2 899.5,352.1 890.5,352.1 885.1,353.9 879.8,359.2 872.6,363.7 870.8,371.8 865.4,371.8 858.2,369.1 856.4,361.9 851.9,357.4 845.6,354.7 842.1,348.5 834.9,343.1 828.6,339.5 821.4,335 819.6,326.9 815.1,322.4"/>
</g>
<g clip-path="url(#skc)" fill="none" stroke="#1c1c00" stroke-opacity="0.85" stroke-width="1.15" stroke-linejoin="round">
<polyline points="469.5,321.3 470.7,330.1 477.1,341.5 487.2,347.9 492.3,356.7 494.8,361.8 505,369.4 517.6,379.5 525.2,390.9 530.3,403.6 540.4,409.9 558.2,400.6 563.2,407.4 565.8,421.3 570.8,431.5 567,444.1 583.5,436.5 594.9,427.7 598.7,431.5 603.8,444.1 608.8,454.3 605,464.4 603.8,472 611.4,478.3 620,479.6 638,472 639.3,482.1 632.9,497.3"/>
<polyline points="544.5,236.9 547.8,243.6 551.2,250.4 554.6,257.2 559.7,265.6 564.7,270.7 569.8,274.1 573.2,278.3 570.6,284.2 574.9,290.9 575.7,299.4 571.5,304.5 564.7,307.8 559.7,312.1 557.1,315.4 564.7,316.3 570.6,312.9 578.2,312.1 585,313.8 590.9,317.1 589.2,324.7 588.4,331.5 591.8,338.2 598.5,345.8 603.6,353.4 607,356 612.9,353.4 620.5,356.8 628.9,356 630.6,353.4"/>
<polyline points="811.5,317.1 795.4,347.6 797.2,352.1 793.6,357.4 799,362.8 804.4,370 809.7,379 814.2,386.2 816.9,393.3 815.1,402.3 810.6,407.7 811.5,413.1 818.7,415.8 825.9,416.7 833.1,414.9"/>
<polyline points="966.9,217.1 962.4,222.4 958,227.8 963.3,233.2 966.9,240.4 971.4,246.7 975,255.6 976.8,264.6 975,271.8 978.6,276.3 971.4,277.2 965.1,277.2 958.8,279 966.9,284.4 975.9,288 982.2,289.8 984.9,283.5 985.8,279.9 992.1,286.2 996.5,294.2 1002.8,286.2 1007.3,278.1 1009.1,284.4 1010.9,293.3 1011.8,302.3 1013.6,311.3 1014.5,318.5 1014.5,324.8 1022.6,326.5 1031.5,331 1037.8,335.5 1044.1,337.3 1053.1,336.4 1062.1,336.4 1063,328.3 1065.7,328.3 1065.7,336.4 1063.9,343.6 1060.3,350.8 1054.9,356.2 1054,361.6 1054.9,370 1059.9,380.4 1065,388 1066.2,393.1"/>
<polyline points="791.9,236.8 797.3,242.2 804.5,244 811.7,248.5 815.3,254.8 818.9,258.3 817.1,263.7 818,268.2 811.7,272.7 807.2,276.3 811.7,281.7 818.9,288.9 824.2,294.2 829.6,297.8 826,303.2 820.7,308.6 813.5,314 810.8,317.2 808,328.7 802.6,334.1 797.2,341.3 795.4,347.6 795.1,347.5 777.3,346.2 762.1,352.6 752,351.3 744.4,362.7 731.7,375.4 721.6,383 711.5,377.9 696.3,375.4 683.6,377.9 663.3,383 650.7,379.2 634.2,370.3 631.7,360.2 630.4,347.5 631.7,337.3 641.8,328.5 646.9,312 648.1,294.3 649.4,279.1 641.8,271.5 643.1,256.3 646.9,241.1 651.9,234.7 648.1,219.5"/>
<polyline points="811.5,317.1 818.7,311.7 827.7,305.4 834,308.1 837.6,302.7 845.6,306.3 852.8,309.9 860,313.5 865.4,309 874.4,305.4 881.5,309 889.6,310.8 895.9,315.3 903.1,314.4 908.5,319.7 913.9,326.9 914.8,334.1 913.9,341.3 908.5,344.9 906.7,351.2 899.5,352.1 890.5,352.1 885.1,353.9 879.8,359.2 872.6,363.7 870.8,371.8 865.4,371.8 858.2,369.1 856.4,361.9 851.9,357.4 845.6,354.7 842.1,348.5 834.9,343.1 828.6,339.5 821.4,335 819.6,326.9 815.1,322.4 811.5,317.1"/>
<polyline points="351.7,371.9 361.8,369.4 370.7,366.9 380.8,365.6 390.9,361.8 401.1,355.5 403.6,350.4 407.4,345.3 406.1,340.8"/>
<polyline points="407.4,345.3 413.7,351.7 420.1,358 418.8,368.1 425.1,379.5 431.5,380.8 439.1,377 446.7,371.9 451.7,368.1 450.5,360.5 442.9,351.7 440.3,345.3 439.6,338.2"/>
<polyline points="451.7,368.1 454.3,375.7 461.9,379.5 469.5,378.3 477.1,380.8 487.2,384.6 493.5,382.1 492.3,370.7 494.3,361.8"/>
<polyline points="345.3,397.3 352.9,396 370.7,398.5 382.1,394.7 392.2,389.7 399.8,378.8 404.9,382.1 403.6,390.9 393.5,401.1 401.1,406.1 407.4,398.5 417.5,392.2 425.1,380.3"/>
<polyline points="401.1,406.1 397.3,417.5 388.4,428.9 380.8,439.1 378.3,449.2 374.5,460.6 365.6,461.9 355.5,460.6 347.9,459.9"/>
<polyline points="397.3,417.5 406.1,421.3 411.2,431.5 417.5,441.6 417.5,450.5 408.7,454.3 396,461.9 384.6,465.7 374.5,460.6"/>
<polyline points="431.5,380.8 432.7,390.9 439.1,398.5 446.7,406.1 451.7,413.7 449.2,421.3 453,428.9 451.7,439.1 458.1,444.1 446.7,451.7 439.1,456.8 432.7,461.9 422.6,454.3 417.5,450.5"/>
<polyline points="487.2,384.6 488.5,389.7 478.3,393.5 472,403.6 464.4,406.1 460.6,411.2 458.1,413.7 451.7,413.7"/>
<polyline points="472,404.1 478.3,411.2 485.9,417.5 482.1,426.4 477.1,434 472,440.3 466.9,444.1 463.1,441.6 458.1,444.1"/>
<polyline points="485.9,417.5 497.3,418.8 505,425.1 512.6,421.3 520.2,422.6 526.5,416.3 534.1,411.2 530.8,404.1"/>
<polyline points="520.2,422.6 525.2,431.5 530.3,439.1 527.8,445.4 535.4,449.2 545.5,453 556.9,454.3 558.2,446.7 567,444.1"/>
<polyline points="545.5,453 551.8,458.1 548,465.7 540.4,472 539.2,474.5 526.5,472 520.2,477.1 512.6,473.3 498.6,482.1 492.3,478.3 488.5,470.7 482.1,464.4 473.3,455.5 470.7,446.7 472,440.3"/>
<polyline points="473.3,455.5 472,464.4 472,470.7 464.4,474.5 459.3,480.9 465.7,482.1 466.9,487.2 464.4,497.3 472,503.7 474.5,512.6 475.8,516.4"/>
<polyline points="488.5,470.7 487.2,482.1 489.7,492.3 492.3,502.4 494.8,508.8 488.5,520.2 475.8,516.4"/>
<polyline points="417.5,450.5 420.1,460.6 423.9,469.5 422.6,474.5 418.8,480.9 408.7,478.3 406.1,482.1 397.3,488.5 396,494.8 393.5,502.4 383.3,498.6 382.1,494.8 384.6,484.7 385.9,474.5 384.6,465.7"/>
<polyline points="383.3,498.6 388.4,508"/>
<polyline points="396,494.8 406.1,482.1"/>
<polyline points="418.8,480.9 421.3,485.9 434,489.7 446.7,496.1 459.3,502.4 468.2,510 475.8,516.4 474.5,525.2 469.5,535.4 464.4,543 461.9,550.6 455.5,553.1 454.3,559.9"/>
<polyline points="488.5,520.2 494.8,522.7 507.5,518.9 520.2,522.7 532.8,526.5 540.4,535.4 548,543 558.2,549.3 564.5,553.1 565.8,559.9"/>
<polyline points="539.2,474.5 545.5,482.1 550.6,492.3 551.8,502.4 555.6,512.6 554.4,520.2 563.2,525.2 573.4,524 586,522.7 597.4,522.7"/>
<polyline points="526.7,242.3 529.3,250.4 532.6,258 539.4,261.4 542.8,270.7 546.1,277.4 546.1,287.6 544.5,294.3 547.8,301.1 552.1,307.8 557.1,313.2"/>
<polyline points="508.1,274.9 512.4,280.8 519.1,285.9 525,292.6 529.3,295.2 534.3,296 539.4,302.8 546.1,307.8 551.2,309.5"/>
<polyline points="504.8,294.3 506.5,302.8 509.8,311.2 511.5,318 517.4,321.4 524.2,322.2 530.9,320.5 537.7,321.4 544.5,319.7 551.2,323 555.4,324.7 559.7,321.4 557.5,315.8"/>
<polyline points="537.7,321.4 538.5,328.1 532.6,329.8 525.9,331.5 522.5,338.2 521.7,345 519.1,351.8 510.7,353.4 502.2,356.8 493.8,359.4 492.1,363.6"/>
<polyline points="538.5,328.1 544.5,333.2 547.8,338.2 548.7,345 552.1,350.1 551.2,355.1 544.5,360.2 542.8,367 547.8,370.3 551.2,372 554.6,380"/>
<polyline points="607,356 603.6,361.9 600.2,368.6 595.1,375.4 591.8,380"/>
<polyline points="544.5,236.9 554.6,234.4 564.7,230.1 573.2,231 578.2,229.3 585,230.1 590.1,226.8 596,223.4 600.2,227.6 607,230.1 614.6,231 617.1,237.7 618.8,241.1 626.4,238.6 635.7,240.3 645.8,239.4"/>
<polyline points="573.2,231 574.9,238.6 578.2,247 579.9,251.2 576.6,256.3 576.6,265.6 576.6,277.4 573.5,278.3"/>
<polyline points="585,230.1 588.4,236.9 591.8,243.6 595.1,247 598.5,245.3 603.6,247.9 608.6,248.7 614.6,251.2 618.8,247.9 618.8,241.1"/>
<polyline points="644.1,247 642.4,257.2 640.7,262.2 634,264.8 627.2,267.3 620.5,269.8 610.3,273.2 607,279.1 603.6,287.6 595.1,294.3 593.4,299.4 586.7,304.5 581.6,308.7 578.2,312.1"/>
<polyline points="590.9,317.1 598.5,312.1 605.3,314.6 612,317.1 618.8,321.4 624.7,327.3 632.3,329.8 641.6,328.1"/>
<polyline points="647.4,226 651,235 662.7,237.7 664.5,244 673.5,239.5 682.4,241.3 688.7,236.8 695,228.7 702.2,222.4 707.6,215.3 711.2,209"/>
<polyline points="688.7,236.8 692.3,242.2 700.4,245.8 705.8,253 711.2,258.3 720.1,259.2 723.7,257.4 729.1,261.9 735.4,261"/>
<polyline points="642.1,266.4 650.1,268.2 657.3,274.5 662.7,270.9 671.7,272.7 680.6,268.2 689.6,269.1 694.1,268.2 700.4,261 705.8,253"/>
<polyline points="689.6,269.1 693.2,277.2 689.6,287.1 687.8,294.2 682.4,301.4 679.7,308.6 680.6,314 683.3,319.4 678.9,326.6 673.5,331.9 669.9,331 660.9,327.4 643,327.4 632.2,330.1"/>
<polyline points="753.3,262.8 756,269.1 755.1,275.4 761.4,271.8 765.9,270.9 763.2,276.3 761.4,279.9 766.8,281.7 772.2,281.7 771.3,290.7 770.4,299.6 763.2,302.3 768.6,310.4 774,319.4 768.6,323.9"/>
<polyline points="682.4,319.4 693.2,317.6 704,315.8 714.8,316.7 721.9,319.4 732.7,324.8 743.5,322.1 754.2,323.9 763.2,323 768.6,323.9 781.2,324.8 791.9,326.6 800.9,329.2 808.1,330.1"/>
<polyline points="630.4,337.1 633.1,330.8 642.1,329 658.2,327.2 665.4,328.1 669.9,333.5 674.4,329.9 678.9,326.3 683.3,330.8 683.3,339.7 687.8,348.7 694.1,355 697.7,363.1 698.6,368.5 695,373 694.1,374.7"/>
<polyline points="632.2,422.3 635.8,424.1 642.1,427.7 647.4,433.1 652.8,433.1 660,437.6 663.6,440.3 665.4,445.7 668.1,451.9 674.4,453.7 678,454.6 677.1,447.4 679.8,440.3 683.3,432.2 679.8,425.9 676.2,420.5 669,416.9 663.6,411.5 667.2,406.2 669.9,399 670.8,393.6 676.2,391.8 679.8,395.4 682.4,398.1"/>
<polyline points="694.1,375.6 690.5,381 683.3,384.6 675.3,387.3 674.4,389.1 682.4,398.1"/>
<polyline points="611.5,447.4 608,452.8 604.4,461.8 602.6,470.8 605.3,476.2"/>
<polyline points="660,437.6 659.1,445.7 660,454.6 658.2,461.8 649.2,465.4 642.1,469 638.5,472.6"/>
<polyline points="683.3,432.2 690.5,438.5 697.7,447.4 704.9,456.4 706.7,463.6 706.7,469"/>
<polyline points="722.8,382.8 729.1,389.1 723.7,393.6 718.3,397.2 713.9,404.4 708.5,402.6 701.3,404.4 694.1,408.9 689.6,411.5 681.5,412.4 683.3,420.5 683.3,432.2"/>
<polyline points="713.9,404.4 715.7,413.3 719.2,422.3 723.7,427.7 719.2,433.1 726.4,437.6 737.2,434.9 746.2,432.2 756,429.5 755.1,420.5 752.4,409.8 746.2,402.6 749.8,393.6 746.2,386.4 739,381 731.8,376.5"/>
<polyline points="746.2,432.2 749.8,442.1 753.3,452.8 758.7,461.8 756.9,470.8 753.3,478"/>
<polyline points="752.4,352.3 758.7,355.9 763.2,361.3 767.7,370.3 771.3,379.2 776.7,388.2 783.9,395.4 780.3,400.8 783.9,404.4 789.2,402.6 792.8,409.8 800,415.1"/>
<polyline points="521.7,378 529.3,375.7 536.9,377.2 539.9,370.4 543,367.4 549.1,371.9 553.6,372.7 554.4,381 558.2,388.6 559.7,394.7 559.7,399.3"/>
<polyline points="559.7,394.7 567.3,395.5 573.4,391.7 579.5,384.1 582.5,381 590.1,382.6 594.7,375 599.2,368.9 603.8,364.3 606.8,356.7"/>
<polyline points="582.5,381 587.1,391.7 588.6,400.8 594.7,408.4 600.7,412.2 606.8,411.5 612.9,405.4 619,399.3 623.5,396.2 626.6,397.8 628.1,390.2 629.6,381 631.1,375 634.2,371.9"/>
<polyline points="606.8,411.5 612.9,416 606.8,420.6 599.2,423.6 597.7,428.2 595,428.2"/>
<polyline points="626.6,397.8 629.6,405.4 630.4,414.5 631.1,422.1 625.1,429.7 622,437.3 622,443.4 614.4,447.9 609.1,451.7"/>
<polyline points="631.1,422.1 637.2,425.1 644.8,431.2 650,432.7"/>
<polyline points="827.6,216.9 824.9,224.1 823.1,233.1 825.8,240.3 832.1,237.6 836.5,238.5 838.3,247.4 842.8,252.8 848.2,258.2 853.6,263.6 854.5,269 858.1,272.6"/>
<polyline points="858.1,272.6 851.8,279.8 846.4,285.1 841.9,291.4 833.9,295.9 830.3,297.7"/>
<polyline points="858.1,272.6 864.4,269 869.8,263.6 875.1,257.3 882.3,257.3 889.5,259.1 896.7,260 903.9,258.2 906.5,252.8 905.7,243.9 903.9,239.4"/>
<polyline points="906.5,252.8 911,258.2 921.8,258.2 927.2,260.9 929.9,267.2 933.5,274.4 936.2,281.5 934.4,286.9 927.2,290.5 921.8,295 917.3,298.6 912.8,294.1 903.9,286 896.7,287.8 893.1,286.9 882.3,286.9 876.9,283.3 869.8,278.9 864.4,278 858.1,272.6"/>
<polyline points="893.1,286.9 891.3,294.1 889.5,301.3 888.6,308.5"/>
<polyline points="929.9,267.2 938,270.8 946.9,276.2 955.9,279.8 959.5,278.3"/>
<polyline points="946.9,276.2 952.3,281.5 959.5,284.2 966.9,284.4"/>
<polyline points="842.1,347.6 845.6,337.7 851,330.5 858.2,326.9 859.1,333.2 867.2,336.8 872.6,338.6 881.5,335.9 888.7,333.2 893.2,326.9 894.1,321.5 890.5,318 889.6,310.8"/>
<polyline points="870.8,371.8 876.2,375.4 881.5,379.9 883.3,383.5 878.9,386.2 878,393.3"/>
<polyline points="923.7,347.6 928.2,343.1 933.6,346.7 939,350.3 944.4,347.6 948,352.1 949.8,359.2 953.3,366.4 955.1,371.8 954.2,378.1 948,378.1 940.8,379 935.4,381.7 936.3,388 939,391.5 935.4,394.2 931.8,391.5 930,386.2 924.6,382.6 923.7,378.1 928.2,375.4 930.9,370 926.4,364.6 924.6,357.4 922.8,352.1 923.7,347.6"/>
<polyline points="913.9,326.9 919.2,326 926.4,326.9 933.6,330.5 940.8,331.4 942.6,338.6 945.3,343.1 951.6,340.4 956.9,335 958.7,330.5 964.1,327.8 968.6,331.4 973.1,328.7"/>
<polyline points="973.1,328.7 976.7,337.7 979.4,346.7 981.2,357.4 980.3,368.2 982.1,377.2 984.8,383.5 980.3,388 977.6,393.3 976.7,400.5"/>
<polyline points="980.3,347.6 987.5,349.4 994.6,351.2 1000,352.1"/>
<polyline points="985.8,279.9 984.9,271.8 987.6,262.8 989.4,253.9 992.1,246.7 997.4,241.3 1001.9,235 1005.5,233.2 1007.3,238.6 1008.2,242.2 1011.8,242.2 1011.8,235.9 1010.9,230.5 1015.4,231.4 1019.9,235.9 1024.4,243.1 1020.8,250.3 1019,257.4 1014.5,261.9 1013.6,266.4 1010.9,271.8 1009.1,278.1 1007.3,278.1"/>
<polyline points="1014.5,261.9 1017.2,271.8 1022.6,277.2 1029.8,281.7 1036.9,279.9 1040.5,277.2 1047.7,275.4 1054.9,270.9 1057.6,265.5 1058.5,261.4"/>
<polyline points="1063.9,263.7 1062.1,271.8 1058.5,277.2 1059.4,284.4 1061.2,289.8 1057.6,295.1 1056.7,300.5 1050.4,303.2 1051.3,307.7 1047.7,313.1 1054.9,317.6 1061.2,314.9 1065.7,316.7 1069.2,319.4 1074.6,320.3 1078.2,329.2 1080,331.9 1089,331 1096.2,330.1 1099.8,331"/>
<polyline points="1069.2,319.4 1068.3,323.9 1065.7,328.3"/>
<polyline points="966.9,284.4 968.7,289.8 964.2,296.9 963.3,302.3 966,309.5 969.6,316.7 972.3,325.7 974.1,332.8 977.7,341.8 980.4,347.2 988.5,350.8 997.4,352.6 1006.4,351.7 1013.6,349 1016.3,343.6 1015.4,334.6 1014.5,324.8"/>
<polyline points="980.4,347.2 982.2,356.2 984,370"/>
<polyline points="1006.4,351.7 1005.5,358 1009.1,365.1 1010.9,370"/>
<polyline points="1006.7,358 1011.7,370.7 1015.5,383.3 1018.1,396 1018.1,406.1 1020.6,414.2"/>
<polyline points="1020.6,410.4 1032,408.7 1044.7,406.1 1054.8,411.2 1062.9,419.3"/>
</g>
<polygon points="345.3,395.6 346.6,383 351.7,372.8 355.5,364 361.8,353.8 369.4,345 377,336.1 382.1,331 396,337.3 406.1,341.2 415,338.6 426.4,341.2 439.1,338.6 441.6,336.1 451.7,332.3 461.9,324.7 472,318.3 479.6,306.9 485.9,299.3 494.8,298.1 502.4,291.7 506.2,284.1 508.8,274 510,263.9 513.8,253.7 520.2,243.6 530.3,238.5 544.2,233.5 549.3,220.8 558.2,214.5 567,204.3 573.4,198 588.6,196.7 606.3,198 612.7,194.2 622.8,196.7 625.3,208.1 627.9,218.3 638,217 648.1,219.5 659.5,214.5 663.3,198 676,190.4 687.4,179 693.7,174.7 700.1,184.1 706.4,192.9 711.5,206.9 719.1,208.1 724.1,219.5 738.1,218.3 740.6,233.5 743.1,244.9 736.8,256.3 734.3,261.3 754.5,262.6 757.1,256.3 767.2,260.1 777.3,265.1 782.4,253.7 787.5,239.8 792.6,236 802.7,239.8 812.8,220.8 823,219.5 828,217 843.2,223.3 853.4,217 866,217 876.2,225.9 886.3,233.5 900.3,238.5 905.3,233.5 911.7,224.6 914.2,217 921.8,213.2 930.7,214.5 940.8,208.1 950.9,208.1 958.5,210.7 966.1,217 973.7,213.2 983.9,211.9 991.5,210.7 999.1,217 1006.7,219.5 1014.3,227.1 1021.9,223.3 1032,228.4 1039.6,233.5 1044.7,241.1 1049.7,253.7 1057.3,261.3 1067.5,263.9 1075.1,268.9 1082.7,274 1095.4,274 1103,281.6 1113.1,284.1 1120.7,285.4 1119.4,299.3 1113.1,309.5 1105.5,322.1 1100.4,332.3 1096.6,342.4 1096.6,355.1 1090.3,362.7 1082.7,372.8 1075.1,380.4 1068.8,388 1066.2,393.1 1066.2,396 1063.7,408.7 1062.4,418.8 1063.7,428.9 1057.3,432.7 1047.2,434 1037.1,435.3 1026.9,437.8 1019.3,441.6 1011.7,440.3 1004.1,436.5 999.1,430.2 994,422.6 992.7,415 986.4,407.4 978.8,401.1 975,393.5 966.1,393.5 956,396 945.9,401.1 935.7,401.1 926.9,406.1 919.3,408.7 907.9,402.3 899,399.8 890.1,394.7 880,392.2 868.6,394.7 855.9,397.3 843.2,401.1 835.6,408.7 828,418.8 825.5,428.9 820.4,441.6 810.3,454.3 800.2,456.8 787.5,461.9 777.3,472 767.2,478.3 754.5,484.7 746.9,477.1 739.3,479.6 731.7,470.7 724.1,469.5 715.3,464.4 706.4,469.5 701.3,482.1 696.3,492.3 676,494.8 662.1,501.2 643.1,498.6 632.9,497.3 629.6,498.6 613.3,501.1 607.1,506.1 599.6,514.9 597.1,523.6 598.4,534.8 602.1,542.3 608.4,548.6 592.1,556 579.7,561 563.4,562.3 542.2,564.8 529.7,567.3 512.3,563.5 492.3,562.3 479.8,563.5 462.4,564.8 452.4,562.3 442.4,553.6 431.2,548.6 419.9,536.1 409.9,526.1 400,517.4 388.7,511.1 380,506.1 374.5,507.5 366.9,508.8 364.3,502.4 363.1,492.3 358,482.1 351.7,472 347.9,460.6 345.3,451.7 339,441.6 333.9,431.5 333.2,420.1 337.7,409.9 344.1,401.1" fill="none" stroke="#25251a" stroke-width="1.9" stroke-linejoin="round"/>
<g font-family="Liberation Sans, sans-serif" font-weight="bold" font-size="12" text-anchor="middle" fill="#000">
<text x="382.1" y="356">1</text>
<text x="433.3" y="363.6">1</text>
<text x="470.7" y="363.1">1</text>
<text x="385.4" y="383.1">1</text>
<text x="458.8" y="397.3">1</text>
<text x="505.7" y="399">1</text>
<text x="368.1" y="425.1">1</text>
<text x="429.5" y="425.1">1</text>
<text x="468.2" y="428.7">1</text>
<text x="547.3" y="432.7">1</text>
<text x="398" y="449">1</text>
<text x="510.5" y="453.5">1</text>
<text x="405.4" y="473">1</text>
<text x="445.9" y="479.6">1</text>
<text x="577.9" y="484.4">1</text>
<text x="375.2" y="489">1</text>
<text x="478.3" y="494.8">1</text>
<text x="535.9" y="516.9">1</text>
<text x="434" y="523.9">1</text>
<text x="508" y="546">1</text>
<text x="599.5" y="216.2">1</text>
<text x="603.3" y="242.1">1</text>
<text x="564" y="254.2">1</text>
<text x="594.1" y="277">1</text>
<text x="614.7" y="339.1">1</text>
<text x="623.6" y="296.8">1</text>
<text x="615.2" y="339.1">1</text>
<text x="829.3" y="263.9">1</text>
<text x="867.3" y="246.1">1</text>
<text x="862.2" y="296.6">1</text>
<text x="837.4" y="374.1">1</text>
<text x="941.6" y="247.9">1</text>
<text x="899" y="278.3">1</text>
<text x="939.5" y="308.7">1</text>
<text x="994.5" y="319.6">1</text>
<text x="909.1" y="372.1">1</text>
<text x="942.1" y="372.1">1</text>
<text x="1035.3" y="376.6">1</text>
<text x="995.3" y="398.7">1</text>
<text x="681.1" y="218.8">2</text>
<text x="718.3" y="239.8">2</text>
<text x="673.5" y="260.1">2</text>
<text x="727.4" y="293.5">2</text>
<text x="668.4" y="304.9">2</text>
<text x="793.3" y="285.9">2</text>
<text x="730.5" y="351.8">2</text>
<text x="663.3" y="359.4">2</text>
</g>
</svg>
<div class="lctl zoom"><div class="pl"></div><div></div></div>
<div class="lctl fs"><svg width="30" height="30" viewBox="0 0 30 30"><path d="M8.300 13V8.300h4.700M17 8.300h4.700v4.700M21.700 17v4.700h-4.700M13 21.700H8.300v-4.700" fill="none" stroke="#333" stroke-width="2.200"/></svg></div>
<div class="logo"><svg width="84" height="54" viewBox="0 0 84 54"><g fill="#1b63b5"><text x="4.800" y="34.700" font-family="Liberation Serif,serif" font-weight="bold" font-size="16.300" textLength="74.200" lengthAdjust="spacingAndGlyphs" stroke="#1b63b5" stroke-width="0.900">SHMÚ</text><rect x="29.800" y="15.100" width="24" height="1.900"/><path d="M29.800 14.300h3.800v3.500h-3.800z"/><rect x="41.600" y="9.400" width="1.900" height="13.600"/><circle cx="37.400" cy="8.100" r="1.900"/><circle cx="46.300" cy="8.100" r="1.900"/><circle cx="41.900" cy="7.600" r="1.500"/><rect x="36" y="7.400" width="11" height="1.300"/><path d="M50 13.800l4.600-2.600v9.800l-4.600-2.600z"/></g><g fill="none" stroke="#1b63b5" stroke-width="2.300"><path d="M5.800 39.4 q3.400 -2.400 6.800 0 t6.800 0 t6.800 0 t6.800 0 t6.800 0 t6.800 0 t6.800 0 t6.800 0 t6.800 0 t6.800 0 t6.200 0"/><path d="M5.800 43.2 q3.400 -2.400 6.800 0 t6.800 0 t6.800 0 t6.800 0 t6.800 0 t6.800 0 t6.800 0 t6.800 0 t6.800 0 t6.800 0 t6.200 0"/><path d="M5.800 47 q3.400 -2.400 6.800 0 t6.800 0 t6.800 0 t6.800 0 t6.800 0 t6.800 0 t6.800 0 t6.800 0 t6.800 0 t6.800 0 t6.200 0"/></g></svg></div>
<div class="mtitle">Meteorologické výstrahy - Nedeľa - 28.12.2025</div>
<div class="info">Aktualizované: 26.12.2025 11:43<br>Najbližšia aktualizácia najneskôr: 26.12.2025 12:00</div>
<div class="legend"><i style="top:7px;background:#558b4b"></i><div style="top:7px">Bez nebezpečných javov</div><i style="top:21px;background:#ffff33;box-shadow:inset 0 0 0 1px #eee56a"></i><div style="top:21px">1. stupeň</div><i style="top:35px;background:#f28c30"></i><div style="top:35px">2. stupeň</div><i style="top:49px;background:#ff1a1a"></i><div style="top:49px">3. stupeň</div></div>
<div class="attr"><span class="flag"></span><a>Leaflet</a> | © OpenStreetmap contributors</div>
</div>
<h2>Tabuľkové zobrazenie výstrah</h2>
<table class="wt" cellspacing="0" cellpadding="0">
<colgroup><col style="width:50px"><col style="width:163px"><col style="width:86px"><col style="width:36.65px"><col style="width:36.65px"><col style="width:36.65px"><col style="width:36.65px"><col style="width:36.65px"><col style="width:36.65px"><col style="width:36.65px"><col style="width:36.65px"><col style="width:36.65px"><col style="width:36.65px"><col style="width:36.65px"><col style="width:36.65px"><col style="width:36.65px"><col style="width:36.65px"><col style="width:36.65px"><col style="width:36.65px"><col style="width:36.65px"><col style="width:36.65px"><col style="width:36.65px"><col style="width:36.65px"><col style="width:36.65px"><col style="width:36.65px"><col style="width:36.65px"><col style="width:36.65px"></colgroup>
<tr class="h"><th colspan="2" class="l">Región</th><th class="l">Jav</th><th colspan="24" class="l">Stupne v hodinových krokoch</th></tr>
<tr class="h"><th class="pm"><span class="plus"></span><span class="minus"></span></th><th></th><th></th><th>0</th><th>1</th><th>2</th><th>3</th><th>4</th><th>5</th><th>6</th><th>7</th><th>8</th><th>9</th><th>10</th><th>11</th><th>12</th><th>13</th><th>14</th><th>15</th><th>16</th><th>17</th><th>18</th><th>19</th><th>20</th><th>21</th><th>22</th><th>23</th></tr>
<tr><td class="p"><span class="plus"></span></td><td class="n">Bratislavský kraj</td><td class="j"><svg class="ic" width="24" height="24" viewBox="0 0 24 24"><rect x=".6" y=".6" width="22.8" height="22.8" fill="#fff62e" stroke="#000" stroke-width="1.2"/><g stroke="#3a3a00" stroke-width="0.9" fill="none"><path d="M5.5 7 L15.7 14.8"/><path d="M4.2 9.2 L11 14.2 M5 6 L12.6 11.6 M6.6 4.6 L13.6 9.8 M4.2 9.2 L6.6 4.6 M6.4 10.8 L8.8 6.2 M8.6 12.4 L11 7.8 M11 14.2 L13.6 9.8"/></g><path d="M17.7 12 L19.5 16.9 L14 16.6 Z" fill="#111"/></svg></td><td class="v1">1</td><td class="v1">1</td><td class="v1">1</td><td class="v1">1</td><td class="v1">1</td><td class="v1">1</td><td class="v1">1</td><td class="v1">1</td><td class="v1">1</td><td class="v1">1</td><td class="v1">1</td><td class="v1">1</td><td class="v1">1</td><td class="v1">1</td><td class="v1">1</td><td class="v1">1</td><td class="v1">1</td><td class="v1">1</td><td class="v1">1</td><td class="v1">1</td><td class="v1">1</td><td class="v1">1</td><td class="v0"></td><td class="v0"></td></tr>
<tr><td class="p"><span class="plus"></span></td><td class="n">Banskobystrický kraj</td><td class="j"><svg class="ic" width="24" height="24" viewBox="0 0 24 24"><defs><linearGradient id="mg" x1="0" y1="0" x2="0" y2="1"><stop offset="0" stop-color="#c4691f"/><stop offset="1" stop-color="#8f4714"/></linearGradient></defs><rect x=".6" y=".6" width="22.8" height="22.8" fill="#f18a36" stroke="#000" stroke-width="1.2"/><path d="M2 21.6 L8.2 9 L11.3 17.2 L14.3 12.4 L21.4 21.6 Z" fill="url(#mg)" stroke="#3a1606" stroke-width="1" stroke-linejoin="miter"/><g stroke="#5a2c0c" stroke-width="0.9" fill="none"><path d="M9.6 4.6 L15.6 9.4 M8.6 6.4 L12.6 9.6 M10.8 3.4 L14.8 6.6 M8.6 6.4 L10.8 3.4 M10.6 8 L12.8 5 M12.6 9.6 L14.8 6.6"/></g><path d="M15.6 8 L18.2 9 L17.4 11.6 L14.8 10.4 Z" fill="#33140a"/></svg></td><td class="v2">2</td><td class="v2">2</td><td class="v2">2</td><td class="v2">2</td><td class="v2">2</td><td class="v2">2</td><td class="v2">2</td><td class="v2">2</td><td class="v2">2</td><td class="v2">2</td><td class="v2">2</td><td class="v2">2</td><td class="v2">2</td><td class="v2">2</td><td class="v2">2</td><td class="v2">2</td><td class="v2">2</td><td class="v2">2</td><td class="v2">2</td><td class="v2">2</td><td class="v2">2</td><td class="v2">2</td><td class="v2">2</td><td class="v2">2</td></tr>
<tr><td class="p"><span class="plus"></span></td><td class="n">Trenčiansky kraj</td><td class="j"><svg class="ic" width="24" height="24" viewBox="0 0 24 24"><rect x=".6" y=".6" width="22.8" height="22.8" fill="#fff62e" stroke="#000" stroke-width="1.2"/><g stroke="#3a3a00" stroke-width="0.9" fill="none"><path d="M5.5 7 L15.7 14.8"/><path d="M4.2 9.2 L11 14.2 M5 6 L12.6 11.6 M6.6 4.6 L13.6 9.8 M4.2 9.2 L6.6 4.6 M6.4 10.8 L8.8 6.2 M8.6 12.4 L11 7.8 M11 14.2 L13.6 9.8"/></g><path d="M17.7 12 L19.5 16.9 L14 16.6 Z" fill="#111"/></svg></td><td class="v1">1</td><td class="v1">1</td><td class="v1">1</td><td class="v1">1</td><td class="v1">1</td><td class="v1">1</td><td class="v1">1</td><td class="v1">1</td><td class="v1">1</td><td class="v1">1</td><td class="v1">1</td><td class="v1">1</td><td class="v1">1</td><td class="v1">1</td><td class="v1">1</td><td class="v1">1</td><td class="v1">1</td><td class="v1">1</td><td class="v1">1</td><td class="v1">1</td><td class="v1">1</td><td class="v1">1</td><td class="v0"></td><td class="v0"></td></tr>
<tr><td class="p"><span class="plus"></span></td><td class="n">Košický kraj</td><td class="j"><svg class="ic" width="24" height="24" viewBox="0 0 24 24"><rect x=".6" y=".6" width="22.8" height="22.8" fill="#fff62e" stroke="#000" stroke-width="1.2"/><g stroke="#3a3a00" stroke-width="0.9" fill="none"><path d="M5.5 7 L15.7 14.8"/><path d="M4.2 9.2 L11 14.2 M5 6 L12.6 11.6 M6.6 4.6 L13.6 9.8 M4.2 9.2 L6.6 4.6 M6.4 10.8 L8.8 6.2 M8.6 12.4 L11 7.8 M11 14.2 L13.6 9.8"/></g><path d="M17.7 12 L19.5 16.9 L14 16.6 Z" fill="#111"/></svg></td><td class="v1">1</td><td class="v1">1</td><td class="v1">1</td><td class="v1">1</td><td class="v1">1</td><td class="v1">1</td><td class="v1">1</td><td class="v1">1</td><td class="v1">1</td><td class="v1">1</td><td class="v1">1</td><td class="v1">1</td><td class="v1">1</td><td class="v1">1</td><td class="v1">1</td><td class="v1">1</td><td class="v1">1</td><td class="v1">1</td><td class="v1">1</td><td class="v1">1</td><td class="v1">1</td><td class="v1">1</td><td class="v1">1</td><td class="v1">1</td></tr>
<tr><td class="p"><span class="plus"></span></td><td class="n">Nitriansky kraj</td><td class="j"><svg class="ic" width="24" height="24" viewBox="0 0 24 24"><rect x=".6" y=".6" width="22.8" height="22.8" fill="#fff62e" stroke="#000" stroke-width="1.2"/><g stroke="#3a3a00" stroke-width="0.9" fill="none"><path d="M5.5 7 L15.7 14.8"/><path d="M4.2 9.2 L11 14.2 M5 6 L12.6 11.6 M6.6 4.6 L13.6 9.8 M4.2 9.2 L6.6 4.6 M6.4 10.8 L8.8 6.2 M8.6 12.4 L11 7.8 M11 14.2 L13.6 9.8"/></g><path d="M17.7 12 L19.5 16.9 L14 16.6 Z" fill="#111"/></svg></td><td class="v1">1</td><td class="v1">1</td><td class="v1">1</td><td class="v1">1</td><td class="v1">1</td><td class="v1">1</td><td class="v1">1</td><td class="v1">1</td><td class="v1">1</td><td class="v1">1</td><td class="v1">1</td><td class="v1">1</td><td class="v1">1</td><td class="v1">1</td><td class="v1">1</td><td class="v1">1</td><td class="v1">1</td><td class="v1">1</td><td class="v1">1</td><td class="v1">1</td><td class="v1">1</td><td class="v1">1</td><td class="v0"></td><td class="v0"></td></tr>
<tr><td class="p"><span class="plus"></span></td><td class="n">Trnavský kraj</td><td class="j"><svg class="ic" width="24" height="24" viewBox="0 0 24 24"><rect x=".6" y=".6" width="22.8" height="22.8" fill="#fff62e" stroke="#000" stroke-width="1.2"/><g stroke="#3a3a00" stroke-width="0.9" fill="none"><path d="M5.5 7 L15.7 14.8"/><path d="M4.2 9.2 L11 14.2 M5 6 L12.6 11.6 M6.6 4.6 L13.6 9.8 M4.2 9.2 L6.6 4.6 M6.4 10.8 L8.8 6.2 M8.6 12.4 L11 7.8 M11 14.2 L13.6 9.8"/></g><path d="M17.7 12 L19.5 16.9 L14 16.6 Z" fill="#111"/></svg></td><td class="v1">1</td><td class="v1">1</td><td class="v1">1</td><td class="v1">1</td><td class="v1">1</td><td class="v1">1</td><td class="v1">1</td><td class="v1">1</td><td class="v1">1</td><td class="v1">1</td><td class="v1">1</td><td class="v1">1</td><td class="v1">1</td><td class="v1">1</td><td class="v1">1</td><td class="v1">1</td><td class="v1">1</td><td class="v1">1</td><td class="v1">1</td><td class="v1">1</td><td class="v1">1</td><td class="v1">1</td><td class="v0"></td><td class="v0"></td></tr>
<tr><td class="p"><span class="plus"></span></td><td class="n">Prešovský kraj</td><td class="j"><svg class="ic" width="24" height="24" viewBox="0 0 24 24"><defs><linearGradient id="mg" x1="0" y1="0" x2="0" y2="1"><stop offset="0" stop-color="#c4691f"/><stop offset="1" stop-color="#8f4714"/></linearGradient></defs><rect x=".6" y=".6" width="22.8" height="22.8" fill="#f18a36" stroke="#000" stroke-width="1.2"/><path d="M2 21.6 L8.2 9 L11.3 17.2 L14.3 12.4 L21.4 21.6 Z" fill="url(#mg)" stroke="#3a1606" stroke-width="1" stroke-linejoin="miter"/><g stroke="#5a2c0c" stroke-width="0.9" fill="none"><path d="M9.6 4.6 L15.6 9.4 M8.6 6.4 L12.6 9.6 M10.8 3.4 L14.8 6.6 M8.6 6.4 L10.8 3.4 M10.6 8 L12.8 5 M12.6 9.6 L14.8 6.6"/></g><path d="M15.6 8 L18.2 9 L17.4 11.6 L14.8 10.4 Z" fill="#33140a"/></svg><svg class="ic" width="24" height="24" viewBox="0 0 24 24"><rect x=".6" y=".6" width="22.8" height="22.8" fill="#fff62e" stroke="#000" stroke-width="1.2"/><g stroke="#2e2e00" stroke-width="0.9" fill="none"><circle cx="11.9" cy="8.3" r="3.3"/><path d="M11.9 4.6v7.4M8.7 6.45l6.4 3.7M8.7 10.15l6.4-3.7"/><circle cx="7.2" cy="16.2" r="2.3"/><path d="M4 16.2h11M5.6 13.6l3.2 5.2M8.8 13.6l-3.2 5.2M10.2 14.4l1.6 3.6M11.8 14.4l-1.6 3.6"/></g><path d="M14.6 13.6 L19 16.2 L14.6 18.8 Z" fill="#111"/></svg><svg class="ic" width="24" height="24" viewBox="0 0 24 24"><rect x=".6" y=".6" width="22.8" height="22.8" fill="#fff62e" stroke="#000" stroke-width="1.2"/><g stroke="#3a3a00" stroke-width="0.9" fill="none"><path d="M5.5 7 L15.7 14.8"/><path d="M4.2 9.2 L11 14.2 M5 6 L12.6 11.6 M6.6 4.6 L13.6 9.8 M4.2 9.2 L6.6 4.6 M6.4 10.8 L8.8 6.2 M8.6 12.4 L11 7.8 M11 14.2 L13.6 9.8"/></g><path d="M17.7 12 L19.5 16.9 L14 16.6 Z" fill="#111"/></svg></td><td class="v2">2</td><td class="v2">2</td><td class="v2">2</td><td class="v2">2</td><td class="v2">2</td><td class="v2">2</td><td class="v2">2</td><td class="v2">2</td><td class="v2">2</td><td class="v2">2</td><td class="v2">2</td><td class="v2">2</td><td class="v2">2</td><td class="v2">2</td><td class="v2">2</td><td class="v2">2</td><td class="v2">2</td><td class="v2">2</td><td class="v2">2</td><td class="v2">2</td><td class="v2">2</td><td class="v2">2</td><td class="v2">2</td><td class="v2">2</td></tr>
<tr><td class="p"><span class="plus"></span></td><td class="n">Žilinský kraj</td><td class="j"><svg class="ic" width="24" height="24" viewBox="0 0 24 24"><defs><linearGradient id="mg" x1="0" y1="0" x2="0" y2="1"><stop offset="0" stop-color="#c4691f"/><stop offset="1" stop-color="#8f4714"/></linearGradient></defs><rect x=".6" y=".6" width="22.8" height="22.8" fill="#f18a36" stroke="#000" stroke-width="1.2"/><path d="M2 21.6 L8.2 9 L11.3 17.2 L14.3 12.4 L21.4 21.6 Z" fill="url(#mg)" stroke="#3a1606" stroke-width="1" stroke-linejoin="miter"/><g stroke="#5a2c0c" stroke-width="0.9" fill="none"><path d="M9.6 4.6 L15.6 9.4 M8.6 6.4 L12.6 9.6 M10.8 3.4 L14.8 6.6 M8.6 6.4 L10.8 3.4 M10.6 8 L12.8 5 M12.6 9.6 L14.8 6.6"/></g><path d="M15.6 8 L18.2 9 L17.4 11.6 L14.8 10.4 Z" fill="#33140a"/></svg><svg class="ic" width="24" height="24" viewBox="0 0 24 24"><rect x=".6" y=".6" width="22.8" height="22.8" fill="#fff62e" stroke="#000" stroke-width="1.2"/><g stroke="#2e2e00" stroke-width="0.9" fill="none"><circle cx="11.9" cy="8.3" r="3.3"/><path d="M11.9 4.6v7.4M8.7 6.45l6.4 3.7M8.7 10.15l6.4-3.7"/><circle cx="7.2" cy="16.2" r="2.3"/><path d="M4 16.2h11M5.6 13.6l3.2 5.2M8.8 13.6l-3.2 5.2M10.2 14.4l1.6 3.6M11.8 14.4l-1.6 3.6"/></g><path d="M14.6 13.6 L19 16.2 L14.6 18.8 Z" fill="#111"/></svg></td><td class="v2">2</td><td class="v2">2</td><td class="v2">2</td><td class="v2">2</td><td class="v2">2</td><td class="v2">2</td><td class="v2">2</td><td class="v2">2</td><td class="v2">2</td><td class="v2">2</td><td class="v2">2</td><td class="v2">2</td><td class="v2">2</td><td class="v2">2</td><td class="v2">2</td><td class="v2">2</td><td class="v2">2</td><td class="v2">2</td><td class="v2">2</td><td class="v2">2</td><td class="v2">2</td><td class="v2">2</td><td class="v2">2</td><td class="v2">2</td></tr>
</table>
</body></html>
